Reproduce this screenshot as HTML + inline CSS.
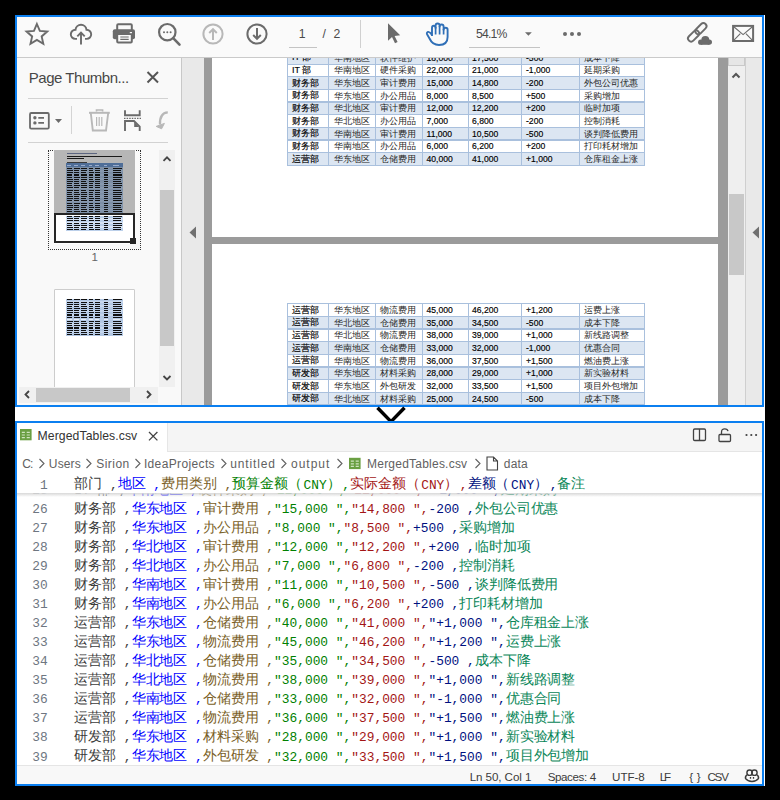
<!DOCTYPE html>
<html><head><meta charset="utf-8"><style>
html,body{margin:0;padding:0}
body{width:780px;height:800px;background:#000;position:relative;overflow:hidden;font-family:"Liberation Sans",sans-serif}
.cj{position:absolute;font-size:14px;line-height:14px;white-space:pre;font-weight:500}
.cj i{font-style:normal;display:inline-block;width:13.95px}
</style></head><body>
<div style="position:absolute;left:15px;top:15px;width:750px;height:771px;background:#ffffff;"></div>
<div style="position:absolute;left:17px;top:17px;width:745px;height:40px;background:#fafafa;"></div>
<div style="position:absolute;left:17px;top:57px;width:745px;height:1px;background:#cacaca;"></div>
<div style="position:absolute;left:17px;top:58px;width:164px;height:347px;background:#f9f9f9;"></div>
<div style="position:absolute;left:181px;top:58px;width:1px;height:347px;background:#c8c8c8;"></div>
<div style="position:absolute;left:182px;top:58px;width:22px;height:347px;background:#e9e9e9;"></div>
<div style="position:absolute;left:204px;top:58px;width:524px;height:347px;background:#9b9b9b;"></div>
<div style="position:absolute;left:212px;top:58px;width:506px;height:179px;background:#ffffff;"></div>
<div style="position:absolute;left:212px;top:244px;width:506px;height:161px;background:#ffffff;"></div>
<div style="position:absolute;left:728px;top:58px;width:17px;height:347px;background:#efefef;"></div>
<div style="position:absolute;left:745px;top:58px;width:1px;height:347px;background:#cfcfcf;"></div>
<div style="position:absolute;left:746px;top:58px;width:16px;height:347px;background:#e9e9e9;"></div>
<div style="position:absolute;left:729px;top:194px;width:15px;height:81px;background:#c8c8c8;"></div>
<div style="position:absolute;left:728px;top:58px;width:17px;height:8px;background:#e6e6e6;box-sizing:border-box;border:1px solid #c9c9c9;border-top:none;"></div>
<svg style="position:absolute;left:730px;top:70px;" width="12" height="10" viewBox="0 0 12 10"><path d="M2.5,7.5 L6,4 L9.5,7.5" fill="none" stroke="#555" stroke-width="2"/></svg>
<svg style="position:absolute;left:188px;top:226px;" width="10" height="13" viewBox="0 0 10 13"><path d="M8,0.5 L8,12.5 L1.5,6.5 Z" fill="#707070"/></svg>
<svg style="position:absolute;left:751.3px;top:226px;" width="10" height="13" viewBox="0 0 10 13"><path d="M8,0.5 L8,12.5 L1.5,6.5 Z" fill="#707070"/></svg>
<svg style="position:absolute;left:0px;top:0px;" width="60" height="60" viewBox="0 0 60 60"><polygon points="36.90,24.00 39.84,30.85 47.27,31.53 41.66,36.45 43.31,43.72 36.90,39.90 30.49,43.72 32.14,36.45 26.53,31.53 33.96,30.85" fill="none" stroke="#6b6b6b" stroke-width="1.9" stroke-linejoin="miter"/></svg>
<svg style="position:absolute;left:66px;top:20px;" width="30" height="28" viewBox="0 0 30 28"><path d="M11,18.9 H9.3 A4.6,4.6 0 1 1 9.53,9.70 A5.5,5.5 0 0 1 20.47,9.70 A4.6,4.6 0 1 1 20.7,18.9 H19" fill="none" stroke="#6b6b6b" stroke-width="1.9"/><path d="M15,24.5 L15,12.8 M11.3,16.3 L15,12.6 L18.7,16.3" fill="none" stroke="#6b6b6b" stroke-width="1.9"/></svg>
<svg style="position:absolute;left:110px;top:20px;" width="28" height="28" viewBox="0 0 28 28"><rect x="7.2" y="4.2" width="14.6" height="7" rx="1" fill="none" stroke="#6b6b6b" stroke-width="2"/><rect x="2.8" y="9.2" width="22.2" height="10" rx="2" fill="#6b6b6b"/><rect x="7.2" y="13.9" width="14.6" height="8.6" rx="1" fill="#fafafa" stroke="#6b6b6b" stroke-width="2"/><path d="M10.3,17 H18.7 M10.3,19.4 H18.7" stroke="#6b6b6b" stroke-width="1.2"/><rect x="19.8" y="12" width="2.2" height="1.2" fill="#fafafa"/></svg>
<svg style="position:absolute;left:150px;top:17px;" width="34" height="32" viewBox="0 0 34 32"><circle cx="17.3" cy="15.2" r="8.2" fill="none" stroke="#6b6b6b" stroke-width="2.2"/><path d="M23.2,21.2 L29.5,27.6" stroke="#6b6b6b" stroke-width="2.6" stroke-linecap="round"/><circle cx="14" cy="15.2" r="1" fill="#6b6b6b"/><circle cx="17.3" cy="15.2" r="1" fill="#6b6b6b"/><circle cx="20.6" cy="15.2" r="1" fill="#6b6b6b"/></svg>
<svg style="position:absolute;left:200px;top:21px;" width="26" height="26" viewBox="0 0 26 26"><circle cx="13" cy="13" r="9.6" fill="none" stroke="#b8b8b8" stroke-width="2"/><path d="M13,19 L13,8.2 M9.2,12 L13,8.2 L16.8,12" fill="none" stroke="#b8b8b8" stroke-width="2"/></svg>
<svg style="position:absolute;left:244px;top:21px;" width="26" height="26" viewBox="0 0 26 26"><circle cx="13" cy="13" r="9.6" fill="none" stroke="#6b6b6b" stroke-width="2"/><path d="M13,7 L13,17.8 M9.2,14 L13,17.8 L16.8,14" fill="none" stroke="#6b6b6b" stroke-width="2"/></svg>
<div style="position:absolute;left:298.67px;top:27.87px;font-size:12.2px;line-height:12.2px;color:#4a4a4a;font-weight:normal;letter-spacing:0.000px;white-space:pre;">1</div>
<div style="position:absolute;left:289px;top:47px;width:28px;height:1px;background:#c4c4c4;"></div>
<div style="position:absolute;left:322.50px;top:27.87px;font-size:12.2px;line-height:12.2px;color:#4a4a4a;font-weight:normal;letter-spacing:0.000px;white-space:pre;">/</div>
<div style="position:absolute;left:333.39px;top:27.87px;font-size:12.2px;line-height:12.2px;color:#4a4a4a;font-weight:normal;letter-spacing:0.000px;white-space:pre;">2</div>
<div style="position:absolute;left:360px;top:20px;width:1px;height:28px;background:#d0d0d0;"></div>
<svg style="position:absolute;left:380px;top:17px;" width="30" height="30" viewBox="0 0 30 30"><path d="M8,6.3 L20.2,18.3 L14.6,18.9 L17.6,25 L15,26.3 L12,20.1 L8,23.8 Z" fill="#6b6b6b"/></svg>
<svg style="position:absolute;left:420px;top:19px;" width="36" height="30" viewBox="0 0 36 30"><path d="M12,17 L12,8.9 Q12,6.7 13.8,6.7 Q15.6,6.7 15.6,8.9 L15.6,6.6 Q15.6,4.5 17.6,4.5 Q19.6,4.5 19.6,6.6 L19.6,7.6 Q19.6,5.5 21.6,5.5 Q23.6,5.5 23.6,7.6 L23.6,10.7 Q23.6,8.8 25.6,8.8 Q27.6,8.8 27.6,10.7 L27.6,18 Q27.6,26 19,26 Q12.5,26 9.5,19.5 L7.2,15.6 Q6.2,13.6 8,12.9 Q9.8,12.4 12,16" fill="none" stroke="#2f6fb7" stroke-width="1.9" stroke-linejoin="round"/><path d="M15.6,8 L15.6,15.6 M19.6,7 L19.6,15.6 M23.6,10 L23.6,15.6" stroke="#2f6fb7" stroke-width="1.7"/></svg>
<div style="position:absolute;left:476.01px;top:28.07px;font-size:12.2px;line-height:12.2px;color:#4a4a4a;font-weight:normal;letter-spacing:-0.792px;white-space:pre;">54.1%</div>
<svg style="position:absolute;left:522px;top:30px;" width="12" height="8" viewBox="0 0 12 8"><path d="M3,2.3 L9.8,2.3 L6.4,5.7 Z" fill="#6b6b6b"/></svg>
<div style="position:absolute;left:469px;top:47px;width:71px;height:1px;background:#c4c4c4;"></div>
<svg style="position:absolute;left:560px;top:28px;" width="24" height="12" viewBox="0 0 24 12"><circle cx="5" cy="6" r="2" fill="#6b6b6b"/><circle cx="12" cy="6" r="2" fill="#6b6b6b"/><circle cx="19" cy="6" r="2" fill="#6b6b6b"/></svg>
<svg style="position:absolute;left:684px;top:19px;" width="32" height="30" viewBox="0 0 32 30"><g fill="none" stroke="#6b6b6b" stroke-width="1.9"><rect x="-6.6" y="-3.1" width="13.2" height="6.2" rx="3.1" transform="translate(16.9 9.7) rotate(-45)"/><rect x="-6.6" y="-3.1" width="13.2" height="6.2" rx="3.1" transform="translate(9.6 17.0) rotate(-45)"/></g><g fill="#fafafa"><circle cx="21.3" cy="20.9" r="5.3"/><circle cx="16.7" cy="23.2" r="3.9"/><circle cx="25.3" cy="23.1" r="4"/></g><g fill="#6b6b6b"><circle cx="21.3" cy="20.9" r="4"/><circle cx="16.7" cy="23.2" r="2.6"/><circle cx="25.3" cy="23.1" r="2.7"/><rect x="16.7" y="21" width="8.6" height="4.8"/></g></svg>
<svg style="position:absolute;left:730px;top:22px;" width="28" height="24" viewBox="0 0 28 24"><rect x="3.1" y="3.9" width="20" height="15.1" fill="none" stroke="#6b6b6b" stroke-width="2"/><path d="M3.5,4.5 L13.1,12.6 L22.7,4.5 M3.5,18.6 L10.3,11.6 M22.7,18.6 L15.9,11.6" fill="none" stroke="#6b6b6b" stroke-width="1.1"/></svg>
<div style="position:absolute;left:28.77px;top:70.10px;font-size:15px;line-height:15px;color:#474747;font-weight:normal;letter-spacing:-0.471px;white-space:pre;">Page Thumbn...</div>
<svg style="position:absolute;left:144px;top:68px;" width="18" height="18" viewBox="0 0 18 18"><path d="M3.5,4 L14,14.5 M14,4 L3.5,14.5" stroke="#555" stroke-width="2"/></svg>
<div style="position:absolute;left:28px;top:98px;width:140px;height:1px;background:#d2d2d2;"></div>
<svg style="position:absolute;left:26px;top:108px;" width="40" height="24" viewBox="0 0 40 24"><rect x="4" y="5" width="18.8" height="15.6" rx="1.2" fill="none" stroke="#6b6b6b" stroke-width="1.8"/><circle cx="8.9" cy="9.8" r="1.7" fill="#6b6b6b"/><circle cx="8.9" cy="14.9" r="1.7" fill="#6b6b6b"/><path d="M12.3,9.8 H18 M12.3,14.9 H18" stroke="#6b6b6b" stroke-width="1.8"/><path d="M29,11 L36,11 L32.5,14.9 Z" fill="#6b6b6b"/></svg>
<div style="position:absolute;left:71px;top:106px;width:1px;height:28px;background:#d4d4d4;"></div>
<svg style="position:absolute;left:86px;top:106px;" width="28" height="28" viewBox="0 0 28 28"><path d="M10.5,5.5 L10.5,4 L16.6,4 L16.6,5.5" fill="none" stroke="#b8b8b8" stroke-width="1.6"/><path d="M3,6.8 L23.8,6.8" stroke="#b8b8b8" stroke-width="2"/><path d="M4.8,7 L6.8,24.5 L20,24.5 L22.2,7" fill="none" stroke="#b8b8b8" stroke-width="1.9"/><path d="M10.6,11 V20 M13.2,11 V20 M15.8,11 V20" stroke="#b8b8b8" stroke-width="1.2"/></svg>
<svg style="position:absolute;left:120px;top:106px;" width="26" height="28" viewBox="0 0 26 28"><path d="M5,4.2 V9.3 H19.7 V4.2" fill="none" stroke="#6b6b6b" stroke-width="1.9"/><path d="M4,12.4 H21" stroke="#6b6b6b" stroke-width="1.3" stroke-dasharray="1.5 1.1"/><path d="M5,25 V15 H14 L19.7,20.7 V25" fill="none" stroke="#6b6b6b" stroke-width="1.9"/><path d="M14.2,16 L14.2,20.9 L19,20.9 Z" fill="#6b6b6b"/></svg>
<div style="position:absolute;left:150px;top:106px;width:18px;height:28px;overflow:hidden">
<svg style="position:absolute;left:0px;top:0px;" width="26" height="28" viewBox="0 0 26 28"><path d="M17.8,6.3 Q9.5,6.8 10,18.5" fill="none" stroke="#b8b8b8" stroke-width="2.3"/><path d="M6.2,20.4 L14.4,17.4 L11.6,22.8 Z" fill="#b8b8b8" stroke="#b8b8b8" stroke-width="1" stroke-linejoin="round"/></svg>
</div>
<div style="position:absolute;left:28px;top:142px;width:140px;height:1px;background:#d2d2d2;"></div>
<div style="position:absolute;left:48px;top:150px;width:93px;height:100px;box-sizing:border-box;border:1px dotted #333;"></div>
<div style="position:absolute;left:54px;top:150px;width:81px;height:93.5px;background:#ffffff;"></div>
<div style="position:absolute;left:54px;top:150px;width:81px;height:63px;background:#b6b6b6;"></div>
<div style="position:absolute;left:67px;top:152.8px;width:30px;height:1.2px;background:#5d6680;"></div>
<div style="position:absolute;left:67px;top:156px;width:55px;height:1.1px;background:#1a1a1a;"></div>
<div style="position:absolute;left:67px;top:158.1px;width:17px;height:1.1px;background:#1a1a1a;"></div>
<div style="position:absolute;left:67px;top:161.6px;width:20px;height:0.9px;background:#3a3a3a;"></div>
<div style="position:absolute;left:66px;top:163px;width:57px;height:4.4px;background:#4f6e98;"></div>
<div style="position:absolute;left:67.2px;top:164.6px;width:3.9199999999999995px;height:0.9px;background:#9aaccc;"></div>
<div style="position:absolute;left:73.6px;top:164.6px;width:4.34px;height:0.9px;background:#9aaccc;"></div>
<div style="position:absolute;left:81.0px;top:164.6px;width:4.34px;height:0.9px;background:#9aaccc;"></div>
<div style="position:absolute;left:88.6px;top:164.6px;width:3.5px;height:0.9px;background:#9aaccc;"></div>
<div style="position:absolute;left:95.4px;top:164.6px;width:3.5px;height:0.9px;background:#9aaccc;"></div>
<div style="position:absolute;left:104.2px;top:164.6px;width:2.94px;height:0.9px;background:#9aaccc;"></div>
<div style="position:absolute;left:112.8px;top:164.6px;width:6.58px;height:0.9px;background:#9aaccc;"></div>
<div style="position:absolute;left:66px;top:167.4px;width:57px;height:2.16px;background:#7d8fa6;"></div>
<div style="position:absolute;left:67.2px;top:167.95000000000002px;width:4.76px;height:1.1px;background:#101010;"></div>
<div style="position:absolute;left:73.6px;top:167.95000000000002px;width:6.2px;height:1.1px;background:#101010;"></div>
<div style="position:absolute;left:81.0px;top:167.95000000000002px;width:5.89px;height:1.1px;background:#101010;"></div>
<div style="position:absolute;left:88.6px;top:167.95000000000002px;width:4.5px;height:1.1px;background:#101010;"></div>
<div style="position:absolute;left:95.4px;top:167.95000000000002px;width:4.25px;height:1.1px;background:#101010;"></div>
<div style="position:absolute;left:104.2px;top:167.95000000000002px;width:4.2px;height:1.1px;background:#101010;"></div>
<div style="position:absolute;left:112.8px;top:167.95000000000002px;width:8.93px;height:1.1px;background:#101010;"></div>
<div style="position:absolute;left:66px;top:169.56px;width:57px;height:2.16px;background:#8798ae;"></div>
<div style="position:absolute;left:67.2px;top:170.11px;width:5.6px;height:1.1px;background:#101010;"></div>
<div style="position:absolute;left:73.6px;top:170.11px;width:5.89px;height:1.1px;background:#101010;"></div>
<div style="position:absolute;left:81.0px;top:170.11px;width:5.58px;height:1.1px;background:#101010;"></div>
<div style="position:absolute;left:88.6px;top:170.11px;width:4.25px;height:1.1px;background:#101010;"></div>
<div style="position:absolute;left:95.4px;top:170.11px;width:5.0px;height:1.1px;background:#101010;"></div>
<div style="position:absolute;left:104.2px;top:170.11px;width:3.9899999999999998px;height:1.1px;background:#101010;"></div>
<div style="position:absolute;left:112.8px;top:170.11px;width:8.46px;height:1.1px;background:#101010;"></div>
<div style="position:absolute;left:66px;top:171.72px;width:57px;height:2.16px;background:#7d8fa6;"></div>
<div style="position:absolute;left:67.2px;top:172.27px;width:5.319999999999999px;height:1.1px;background:#101010;"></div>
<div style="position:absolute;left:73.6px;top:172.27px;width:5.58px;height:1.1px;background:#101010;"></div>
<div style="position:absolute;left:81.0px;top:172.27px;width:5.27px;height:1.1px;background:#101010;"></div>
<div style="position:absolute;left:88.6px;top:172.27px;width:5.0px;height:1.1px;background:#101010;"></div>
<div style="position:absolute;left:95.4px;top:172.27px;width:4.75px;height:1.1px;background:#101010;"></div>
<div style="position:absolute;left:104.2px;top:172.27px;width:3.7800000000000002px;height:1.1px;background:#101010;"></div>
<div style="position:absolute;left:112.8px;top:172.27px;width:7.99px;height:1.1px;background:#101010;"></div>
<div style="position:absolute;left:66px;top:173.88px;width:57px;height:2.16px;background:#8798ae;"></div>
<div style="position:absolute;left:67.2px;top:174.43px;width:5.04px;height:1.1px;background:#101010;"></div>
<div style="position:absolute;left:73.6px;top:174.43px;width:5.27px;height:1.1px;background:#101010;"></div>
<div style="position:absolute;left:81.0px;top:174.43px;width:6.2px;height:1.1px;background:#101010;"></div>
<div style="position:absolute;left:88.6px;top:174.43px;width:4.75px;height:1.1px;background:#101010;"></div>
<div style="position:absolute;left:95.4px;top:174.43px;width:4.5px;height:1.1px;background:#101010;"></div>
<div style="position:absolute;left:104.2px;top:174.43px;width:3.57px;height:1.1px;background:#101010;"></div>
<div style="position:absolute;left:112.8px;top:174.43px;width:9.4px;height:1.1px;background:#101010;"></div>
<div style="position:absolute;left:66px;top:176.04px;width:57px;height:2.16px;background:#7d8fa6;"></div>
<div style="position:absolute;left:67.2px;top:176.59px;width:4.76px;height:1.1px;background:#101010;"></div>
<div style="position:absolute;left:73.6px;top:176.59px;width:6.2px;height:1.1px;background:#101010;"></div>
<div style="position:absolute;left:81.0px;top:176.59px;width:5.89px;height:1.1px;background:#101010;"></div>
<div style="position:absolute;left:88.6px;top:176.59px;width:4.5px;height:1.1px;background:#101010;"></div>
<div style="position:absolute;left:95.4px;top:176.59px;width:4.25px;height:1.1px;background:#101010;"></div>
<div style="position:absolute;left:104.2px;top:176.59px;width:4.2px;height:1.1px;background:#101010;"></div>
<div style="position:absolute;left:112.8px;top:176.59px;width:8.93px;height:1.1px;background:#101010;"></div>
<div style="position:absolute;left:66px;top:178.2px;width:57px;height:2.16px;background:#8798ae;"></div>
<div style="position:absolute;left:67.2px;top:178.75px;width:5.6px;height:1.1px;background:#101010;"></div>
<div style="position:absolute;left:73.6px;top:178.75px;width:5.89px;height:1.1px;background:#101010;"></div>
<div style="position:absolute;left:81.0px;top:178.75px;width:5.58px;height:1.1px;background:#101010;"></div>
<div style="position:absolute;left:88.6px;top:178.75px;width:4.25px;height:1.1px;background:#101010;"></div>
<div style="position:absolute;left:95.4px;top:178.75px;width:5.0px;height:1.1px;background:#101010;"></div>
<div style="position:absolute;left:104.2px;top:178.75px;width:3.9899999999999998px;height:1.1px;background:#101010;"></div>
<div style="position:absolute;left:112.8px;top:178.75px;width:8.46px;height:1.1px;background:#101010;"></div>
<div style="position:absolute;left:66px;top:180.35999999999999px;width:57px;height:2.16px;background:#7d8fa6;"></div>
<div style="position:absolute;left:67.2px;top:180.91px;width:5.319999999999999px;height:1.1px;background:#101010;"></div>
<div style="position:absolute;left:73.6px;top:180.91px;width:5.58px;height:1.1px;background:#101010;"></div>
<div style="position:absolute;left:81.0px;top:180.91px;width:5.27px;height:1.1px;background:#101010;"></div>
<div style="position:absolute;left:88.6px;top:180.91px;width:5.0px;height:1.1px;background:#101010;"></div>
<div style="position:absolute;left:95.4px;top:180.91px;width:4.75px;height:1.1px;background:#101010;"></div>
<div style="position:absolute;left:104.2px;top:180.91px;width:3.7800000000000002px;height:1.1px;background:#101010;"></div>
<div style="position:absolute;left:112.8px;top:180.91px;width:7.99px;height:1.1px;background:#101010;"></div>
<div style="position:absolute;left:66px;top:182.51999999999998px;width:57px;height:2.16px;background:#8798ae;"></div>
<div style="position:absolute;left:67.2px;top:183.07px;width:5.04px;height:1.1px;background:#101010;"></div>
<div style="position:absolute;left:73.6px;top:183.07px;width:5.27px;height:1.1px;background:#101010;"></div>
<div style="position:absolute;left:81.0px;top:183.07px;width:6.2px;height:1.1px;background:#101010;"></div>
<div style="position:absolute;left:88.6px;top:183.07px;width:4.75px;height:1.1px;background:#101010;"></div>
<div style="position:absolute;left:95.4px;top:183.07px;width:4.5px;height:1.1px;background:#101010;"></div>
<div style="position:absolute;left:104.2px;top:183.07px;width:3.57px;height:1.1px;background:#101010;"></div>
<div style="position:absolute;left:112.8px;top:183.07px;width:9.4px;height:1.1px;background:#101010;"></div>
<div style="position:absolute;left:66px;top:184.67999999999998px;width:57px;height:2.16px;background:#7d8fa6;"></div>
<div style="position:absolute;left:67.2px;top:185.23px;width:4.76px;height:1.1px;background:#101010;"></div>
<div style="position:absolute;left:73.6px;top:185.23px;width:6.2px;height:1.1px;background:#101010;"></div>
<div style="position:absolute;left:81.0px;top:185.23px;width:5.89px;height:1.1px;background:#101010;"></div>
<div style="position:absolute;left:88.6px;top:185.23px;width:4.5px;height:1.1px;background:#101010;"></div>
<div style="position:absolute;left:95.4px;top:185.23px;width:4.25px;height:1.1px;background:#101010;"></div>
<div style="position:absolute;left:104.2px;top:185.23px;width:4.2px;height:1.1px;background:#101010;"></div>
<div style="position:absolute;left:112.8px;top:185.23px;width:8.93px;height:1.1px;background:#101010;"></div>
<div style="position:absolute;left:66px;top:186.83999999999997px;width:57px;height:2.16px;background:#8798ae;"></div>
<div style="position:absolute;left:67.2px;top:187.39px;width:5.6px;height:1.1px;background:#101010;"></div>
<div style="position:absolute;left:73.6px;top:187.39px;width:5.89px;height:1.1px;background:#101010;"></div>
<div style="position:absolute;left:81.0px;top:187.39px;width:5.58px;height:1.1px;background:#101010;"></div>
<div style="position:absolute;left:88.6px;top:187.39px;width:4.25px;height:1.1px;background:#101010;"></div>
<div style="position:absolute;left:95.4px;top:187.39px;width:5.0px;height:1.1px;background:#101010;"></div>
<div style="position:absolute;left:104.2px;top:187.39px;width:3.9899999999999998px;height:1.1px;background:#101010;"></div>
<div style="position:absolute;left:112.8px;top:187.39px;width:8.46px;height:1.1px;background:#101010;"></div>
<div style="position:absolute;left:66px;top:188.99999999999997px;width:57px;height:2.16px;background:#7d8fa6;"></div>
<div style="position:absolute;left:67.2px;top:189.54999999999998px;width:5.319999999999999px;height:1.1px;background:#101010;"></div>
<div style="position:absolute;left:73.6px;top:189.54999999999998px;width:5.58px;height:1.1px;background:#101010;"></div>
<div style="position:absolute;left:81.0px;top:189.54999999999998px;width:5.27px;height:1.1px;background:#101010;"></div>
<div style="position:absolute;left:88.6px;top:189.54999999999998px;width:5.0px;height:1.1px;background:#101010;"></div>
<div style="position:absolute;left:95.4px;top:189.54999999999998px;width:4.75px;height:1.1px;background:#101010;"></div>
<div style="position:absolute;left:104.2px;top:189.54999999999998px;width:3.7800000000000002px;height:1.1px;background:#101010;"></div>
<div style="position:absolute;left:112.8px;top:189.54999999999998px;width:7.99px;height:1.1px;background:#101010;"></div>
<div style="position:absolute;left:66px;top:191.15999999999997px;width:57px;height:2.16px;background:#8798ae;"></div>
<div style="position:absolute;left:67.2px;top:191.70999999999998px;width:5.04px;height:1.1px;background:#101010;"></div>
<div style="position:absolute;left:73.6px;top:191.70999999999998px;width:5.27px;height:1.1px;background:#101010;"></div>
<div style="position:absolute;left:81.0px;top:191.70999999999998px;width:6.2px;height:1.1px;background:#101010;"></div>
<div style="position:absolute;left:88.6px;top:191.70999999999998px;width:4.75px;height:1.1px;background:#101010;"></div>
<div style="position:absolute;left:95.4px;top:191.70999999999998px;width:4.5px;height:1.1px;background:#101010;"></div>
<div style="position:absolute;left:104.2px;top:191.70999999999998px;width:3.57px;height:1.1px;background:#101010;"></div>
<div style="position:absolute;left:112.8px;top:191.70999999999998px;width:9.4px;height:1.1px;background:#101010;"></div>
<div style="position:absolute;left:66px;top:193.31999999999996px;width:57px;height:2.16px;background:#7d8fa6;"></div>
<div style="position:absolute;left:67.2px;top:193.86999999999998px;width:4.76px;height:1.1px;background:#101010;"></div>
<div style="position:absolute;left:73.6px;top:193.86999999999998px;width:6.2px;height:1.1px;background:#101010;"></div>
<div style="position:absolute;left:81.0px;top:193.86999999999998px;width:5.89px;height:1.1px;background:#101010;"></div>
<div style="position:absolute;left:88.6px;top:193.86999999999998px;width:4.5px;height:1.1px;background:#101010;"></div>
<div style="position:absolute;left:95.4px;top:193.86999999999998px;width:4.25px;height:1.1px;background:#101010;"></div>
<div style="position:absolute;left:104.2px;top:193.86999999999998px;width:4.2px;height:1.1px;background:#101010;"></div>
<div style="position:absolute;left:112.8px;top:193.86999999999998px;width:8.93px;height:1.1px;background:#101010;"></div>
<div style="position:absolute;left:66px;top:195.47999999999996px;width:57px;height:2.16px;background:#8798ae;"></div>
<div style="position:absolute;left:67.2px;top:196.02999999999997px;width:5.6px;height:1.1px;background:#101010;"></div>
<div style="position:absolute;left:73.6px;top:196.02999999999997px;width:5.89px;height:1.1px;background:#101010;"></div>
<div style="position:absolute;left:81.0px;top:196.02999999999997px;width:5.58px;height:1.1px;background:#101010;"></div>
<div style="position:absolute;left:88.6px;top:196.02999999999997px;width:4.25px;height:1.1px;background:#101010;"></div>
<div style="position:absolute;left:95.4px;top:196.02999999999997px;width:5.0px;height:1.1px;background:#101010;"></div>
<div style="position:absolute;left:104.2px;top:196.02999999999997px;width:3.9899999999999998px;height:1.1px;background:#101010;"></div>
<div style="position:absolute;left:112.8px;top:196.02999999999997px;width:8.46px;height:1.1px;background:#101010;"></div>
<div style="position:absolute;left:66px;top:197.63999999999996px;width:57px;height:2.16px;background:#7d8fa6;"></div>
<div style="position:absolute;left:67.2px;top:198.18999999999997px;width:5.319999999999999px;height:1.1px;background:#101010;"></div>
<div style="position:absolute;left:73.6px;top:198.18999999999997px;width:5.58px;height:1.1px;background:#101010;"></div>
<div style="position:absolute;left:81.0px;top:198.18999999999997px;width:5.27px;height:1.1px;background:#101010;"></div>
<div style="position:absolute;left:88.6px;top:198.18999999999997px;width:5.0px;height:1.1px;background:#101010;"></div>
<div style="position:absolute;left:95.4px;top:198.18999999999997px;width:4.75px;height:1.1px;background:#101010;"></div>
<div style="position:absolute;left:104.2px;top:198.18999999999997px;width:3.7800000000000002px;height:1.1px;background:#101010;"></div>
<div style="position:absolute;left:112.8px;top:198.18999999999997px;width:7.99px;height:1.1px;background:#101010;"></div>
<div style="position:absolute;left:66px;top:199.79999999999995px;width:57px;height:2.16px;background:#8798ae;"></div>
<div style="position:absolute;left:67.2px;top:200.34999999999997px;width:5.04px;height:1.1px;background:#101010;"></div>
<div style="position:absolute;left:73.6px;top:200.34999999999997px;width:5.27px;height:1.1px;background:#101010;"></div>
<div style="position:absolute;left:81.0px;top:200.34999999999997px;width:6.2px;height:1.1px;background:#101010;"></div>
<div style="position:absolute;left:88.6px;top:200.34999999999997px;width:4.75px;height:1.1px;background:#101010;"></div>
<div style="position:absolute;left:95.4px;top:200.34999999999997px;width:4.5px;height:1.1px;background:#101010;"></div>
<div style="position:absolute;left:104.2px;top:200.34999999999997px;width:3.57px;height:1.1px;background:#101010;"></div>
<div style="position:absolute;left:112.8px;top:200.34999999999997px;width:9.4px;height:1.1px;background:#101010;"></div>
<div style="position:absolute;left:66px;top:201.95999999999995px;width:57px;height:2.16px;background:#7d8fa6;"></div>
<div style="position:absolute;left:67.2px;top:202.50999999999996px;width:4.76px;height:1.1px;background:#101010;"></div>
<div style="position:absolute;left:73.6px;top:202.50999999999996px;width:6.2px;height:1.1px;background:#101010;"></div>
<div style="position:absolute;left:81.0px;top:202.50999999999996px;width:5.89px;height:1.1px;background:#101010;"></div>
<div style="position:absolute;left:88.6px;top:202.50999999999996px;width:4.5px;height:1.1px;background:#101010;"></div>
<div style="position:absolute;left:95.4px;top:202.50999999999996px;width:4.25px;height:1.1px;background:#101010;"></div>
<div style="position:absolute;left:104.2px;top:202.50999999999996px;width:4.2px;height:1.1px;background:#101010;"></div>
<div style="position:absolute;left:112.8px;top:202.50999999999996px;width:8.93px;height:1.1px;background:#101010;"></div>
<div style="position:absolute;left:66px;top:204.11999999999995px;width:57px;height:2.16px;background:#8798ae;"></div>
<div style="position:absolute;left:67.2px;top:204.66999999999996px;width:5.6px;height:1.1px;background:#101010;"></div>
<div style="position:absolute;left:73.6px;top:204.66999999999996px;width:5.89px;height:1.1px;background:#101010;"></div>
<div style="position:absolute;left:81.0px;top:204.66999999999996px;width:5.58px;height:1.1px;background:#101010;"></div>
<div style="position:absolute;left:88.6px;top:204.66999999999996px;width:4.25px;height:1.1px;background:#101010;"></div>
<div style="position:absolute;left:95.4px;top:204.66999999999996px;width:5.0px;height:1.1px;background:#101010;"></div>
<div style="position:absolute;left:104.2px;top:204.66999999999996px;width:3.9899999999999998px;height:1.1px;background:#101010;"></div>
<div style="position:absolute;left:112.8px;top:204.66999999999996px;width:8.46px;height:1.1px;background:#101010;"></div>
<div style="position:absolute;left:66px;top:206.27999999999994px;width:57px;height:2.16px;background:#7d8fa6;"></div>
<div style="position:absolute;left:67.2px;top:206.82999999999996px;width:5.319999999999999px;height:1.1px;background:#101010;"></div>
<div style="position:absolute;left:73.6px;top:206.82999999999996px;width:5.58px;height:1.1px;background:#101010;"></div>
<div style="position:absolute;left:81.0px;top:206.82999999999996px;width:5.27px;height:1.1px;background:#101010;"></div>
<div style="position:absolute;left:88.6px;top:206.82999999999996px;width:5.0px;height:1.1px;background:#101010;"></div>
<div style="position:absolute;left:95.4px;top:206.82999999999996px;width:4.75px;height:1.1px;background:#101010;"></div>
<div style="position:absolute;left:104.2px;top:206.82999999999996px;width:3.7800000000000002px;height:1.1px;background:#101010;"></div>
<div style="position:absolute;left:112.8px;top:206.82999999999996px;width:7.99px;height:1.1px;background:#101010;"></div>
<div style="position:absolute;left:66px;top:208.43999999999994px;width:57px;height:2.16px;background:#8798ae;"></div>
<div style="position:absolute;left:67.2px;top:208.98999999999995px;width:5.04px;height:1.1px;background:#101010;"></div>
<div style="position:absolute;left:73.6px;top:208.98999999999995px;width:5.27px;height:1.1px;background:#101010;"></div>
<div style="position:absolute;left:81.0px;top:208.98999999999995px;width:6.2px;height:1.1px;background:#101010;"></div>
<div style="position:absolute;left:88.6px;top:208.98999999999995px;width:4.75px;height:1.1px;background:#101010;"></div>
<div style="position:absolute;left:95.4px;top:208.98999999999995px;width:4.5px;height:1.1px;background:#101010;"></div>
<div style="position:absolute;left:104.2px;top:208.98999999999995px;width:3.57px;height:1.1px;background:#101010;"></div>
<div style="position:absolute;left:112.8px;top:208.98999999999995px;width:9.4px;height:1.1px;background:#101010;"></div>
<div style="position:absolute;left:66px;top:210.59999999999994px;width:57px;height:2.16px;background:#7d8fa6;"></div>
<div style="position:absolute;left:67.2px;top:211.14999999999995px;width:4.76px;height:1.1px;background:#101010;"></div>
<div style="position:absolute;left:73.6px;top:211.14999999999995px;width:6.2px;height:1.1px;background:#101010;"></div>
<div style="position:absolute;left:81.0px;top:211.14999999999995px;width:5.89px;height:1.1px;background:#101010;"></div>
<div style="position:absolute;left:88.6px;top:211.14999999999995px;width:4.5px;height:1.1px;background:#101010;"></div>
<div style="position:absolute;left:95.4px;top:211.14999999999995px;width:4.25px;height:1.1px;background:#101010;"></div>
<div style="position:absolute;left:104.2px;top:211.14999999999995px;width:4.2px;height:1.1px;background:#101010;"></div>
<div style="position:absolute;left:112.8px;top:211.14999999999995px;width:8.93px;height:1.1px;background:#101010;"></div>
<div style="position:absolute;left:66px;top:215.5px;width:57px;height:2.16px;background:#bcd0ea;"></div>
<div style="position:absolute;left:67.2px;top:216.05px;width:4.76px;height:1.1px;background:#101010;"></div>
<div style="position:absolute;left:73.6px;top:216.05px;width:6.2px;height:1.1px;background:#101010;"></div>
<div style="position:absolute;left:81.0px;top:216.05px;width:5.89px;height:1.1px;background:#101010;"></div>
<div style="position:absolute;left:88.6px;top:216.05px;width:4.5px;height:1.1px;background:#101010;"></div>
<div style="position:absolute;left:95.4px;top:216.05px;width:4.25px;height:1.1px;background:#101010;"></div>
<div style="position:absolute;left:104.2px;top:216.05px;width:4.2px;height:1.1px;background:#101010;"></div>
<div style="position:absolute;left:112.8px;top:216.05px;width:8.93px;height:1.1px;background:#101010;"></div>
<div style="position:absolute;left:66px;top:217.66px;width:57px;height:2.16px;background:#d6e2f2;"></div>
<div style="position:absolute;left:67.2px;top:218.21px;width:5.6px;height:1.1px;background:#101010;"></div>
<div style="position:absolute;left:73.6px;top:218.21px;width:5.89px;height:1.1px;background:#101010;"></div>
<div style="position:absolute;left:81.0px;top:218.21px;width:5.58px;height:1.1px;background:#101010;"></div>
<div style="position:absolute;left:88.6px;top:218.21px;width:4.25px;height:1.1px;background:#101010;"></div>
<div style="position:absolute;left:95.4px;top:218.21px;width:5.0px;height:1.1px;background:#101010;"></div>
<div style="position:absolute;left:104.2px;top:218.21px;width:3.9899999999999998px;height:1.1px;background:#101010;"></div>
<div style="position:absolute;left:112.8px;top:218.21px;width:8.46px;height:1.1px;background:#101010;"></div>
<div style="position:absolute;left:66px;top:219.82px;width:57px;height:2.16px;background:#bcd0ea;"></div>
<div style="position:absolute;left:67.2px;top:220.37px;width:5.319999999999999px;height:1.1px;background:#101010;"></div>
<div style="position:absolute;left:73.6px;top:220.37px;width:5.58px;height:1.1px;background:#101010;"></div>
<div style="position:absolute;left:81.0px;top:220.37px;width:5.27px;height:1.1px;background:#101010;"></div>
<div style="position:absolute;left:88.6px;top:220.37px;width:5.0px;height:1.1px;background:#101010;"></div>
<div style="position:absolute;left:95.4px;top:220.37px;width:4.75px;height:1.1px;background:#101010;"></div>
<div style="position:absolute;left:104.2px;top:220.37px;width:3.7800000000000002px;height:1.1px;background:#101010;"></div>
<div style="position:absolute;left:112.8px;top:220.37px;width:7.99px;height:1.1px;background:#101010;"></div>
<div style="position:absolute;left:66px;top:221.98px;width:57px;height:2.16px;background:#d6e2f2;"></div>
<div style="position:absolute;left:67.2px;top:222.53px;width:5.04px;height:1.1px;background:#101010;"></div>
<div style="position:absolute;left:73.6px;top:222.53px;width:5.27px;height:1.1px;background:#101010;"></div>
<div style="position:absolute;left:81.0px;top:222.53px;width:6.2px;height:1.1px;background:#101010;"></div>
<div style="position:absolute;left:88.6px;top:222.53px;width:4.75px;height:1.1px;background:#101010;"></div>
<div style="position:absolute;left:95.4px;top:222.53px;width:4.5px;height:1.1px;background:#101010;"></div>
<div style="position:absolute;left:104.2px;top:222.53px;width:3.57px;height:1.1px;background:#101010;"></div>
<div style="position:absolute;left:112.8px;top:222.53px;width:9.4px;height:1.1px;background:#101010;"></div>
<div style="position:absolute;left:66px;top:224.14px;width:57px;height:2.16px;background:#bcd0ea;"></div>
<div style="position:absolute;left:67.2px;top:224.69px;width:4.76px;height:1.1px;background:#101010;"></div>
<div style="position:absolute;left:73.6px;top:224.69px;width:6.2px;height:1.1px;background:#101010;"></div>
<div style="position:absolute;left:81.0px;top:224.69px;width:5.89px;height:1.1px;background:#101010;"></div>
<div style="position:absolute;left:88.6px;top:224.69px;width:4.5px;height:1.1px;background:#101010;"></div>
<div style="position:absolute;left:95.4px;top:224.69px;width:4.25px;height:1.1px;background:#101010;"></div>
<div style="position:absolute;left:104.2px;top:224.69px;width:4.2px;height:1.1px;background:#101010;"></div>
<div style="position:absolute;left:112.8px;top:224.69px;width:8.93px;height:1.1px;background:#101010;"></div>
<div style="position:absolute;left:66px;top:226.29999999999998px;width:57px;height:2.16px;background:#d6e2f2;"></div>
<div style="position:absolute;left:67.2px;top:226.85px;width:5.6px;height:1.1px;background:#101010;"></div>
<div style="position:absolute;left:73.6px;top:226.85px;width:5.89px;height:1.1px;background:#101010;"></div>
<div style="position:absolute;left:81.0px;top:226.85px;width:5.58px;height:1.1px;background:#101010;"></div>
<div style="position:absolute;left:88.6px;top:226.85px;width:4.25px;height:1.1px;background:#101010;"></div>
<div style="position:absolute;left:95.4px;top:226.85px;width:5.0px;height:1.1px;background:#101010;"></div>
<div style="position:absolute;left:104.2px;top:226.85px;width:3.9899999999999998px;height:1.1px;background:#101010;"></div>
<div style="position:absolute;left:112.8px;top:226.85px;width:8.46px;height:1.1px;background:#101010;"></div>
<div style="position:absolute;left:66px;top:228.45999999999998px;width:57px;height:2.16px;background:#bcd0ea;"></div>
<div style="position:absolute;left:67.2px;top:229.01px;width:5.319999999999999px;height:1.1px;background:#101010;"></div>
<div style="position:absolute;left:73.6px;top:229.01px;width:5.58px;height:1.1px;background:#101010;"></div>
<div style="position:absolute;left:81.0px;top:229.01px;width:5.27px;height:1.1px;background:#101010;"></div>
<div style="position:absolute;left:88.6px;top:229.01px;width:5.0px;height:1.1px;background:#101010;"></div>
<div style="position:absolute;left:95.4px;top:229.01px;width:4.75px;height:1.1px;background:#101010;"></div>
<div style="position:absolute;left:104.2px;top:229.01px;width:3.7800000000000002px;height:1.1px;background:#101010;"></div>
<div style="position:absolute;left:112.8px;top:229.01px;width:7.99px;height:1.1px;background:#101010;"></div>
<div style="position:absolute;left:54.3px;top:213px;width:81px;height:29.5px;box-sizing:border-box;border:2px solid #262626;"></div>
<div style="position:absolute;left:130px;top:238px;width:5.5px;height:5.5px;background:#262626;"></div>
<div style="position:absolute;left:91.50px;top:251.77px;font-size:11.5px;line-height:11.5px;color:#666;font-family:'Liberation Sans',sans-serif;white-space:pre;">1</div>
<div style="position:absolute;left:54.5px;top:290px;width:79.5px;height:97px;background:#ffffff;box-shadow:0 0 0 0.6px #b0b0b0;"></div>
<div style="position:absolute;left:66px;top:298.8px;width:57px;height:2.16px;background:#b3c8e4;"></div>
<div style="position:absolute;left:67.2px;top:299.35px;width:4.76px;height:1.1px;background:#101010;"></div>
<div style="position:absolute;left:73.6px;top:299.35px;width:6.2px;height:1.1px;background:#101010;"></div>
<div style="position:absolute;left:81.0px;top:299.35px;width:5.89px;height:1.1px;background:#101010;"></div>
<div style="position:absolute;left:88.6px;top:299.35px;width:4.5px;height:1.1px;background:#101010;"></div>
<div style="position:absolute;left:95.4px;top:299.35px;width:4.25px;height:1.1px;background:#101010;"></div>
<div style="position:absolute;left:104.2px;top:299.35px;width:4.2px;height:1.1px;background:#101010;"></div>
<div style="position:absolute;left:112.8px;top:299.35px;width:8.93px;height:1.1px;background:#101010;"></div>
<div style="position:absolute;left:66px;top:300.96000000000004px;width:57px;height:2.16px;background:#c6d6ec;"></div>
<div style="position:absolute;left:67.2px;top:301.51000000000005px;width:5.6px;height:1.1px;background:#101010;"></div>
<div style="position:absolute;left:73.6px;top:301.51000000000005px;width:5.89px;height:1.1px;background:#101010;"></div>
<div style="position:absolute;left:81.0px;top:301.51000000000005px;width:5.58px;height:1.1px;background:#101010;"></div>
<div style="position:absolute;left:88.6px;top:301.51000000000005px;width:4.25px;height:1.1px;background:#101010;"></div>
<div style="position:absolute;left:95.4px;top:301.51000000000005px;width:5.0px;height:1.1px;background:#101010;"></div>
<div style="position:absolute;left:104.2px;top:301.51000000000005px;width:3.9899999999999998px;height:1.1px;background:#101010;"></div>
<div style="position:absolute;left:112.8px;top:301.51000000000005px;width:8.46px;height:1.1px;background:#101010;"></div>
<div style="position:absolute;left:66px;top:303.12000000000006px;width:57px;height:2.16px;background:#b3c8e4;"></div>
<div style="position:absolute;left:67.2px;top:303.6700000000001px;width:5.319999999999999px;height:1.1px;background:#101010;"></div>
<div style="position:absolute;left:73.6px;top:303.6700000000001px;width:5.58px;height:1.1px;background:#101010;"></div>
<div style="position:absolute;left:81.0px;top:303.6700000000001px;width:5.27px;height:1.1px;background:#101010;"></div>
<div style="position:absolute;left:88.6px;top:303.6700000000001px;width:5.0px;height:1.1px;background:#101010;"></div>
<div style="position:absolute;left:95.4px;top:303.6700000000001px;width:4.75px;height:1.1px;background:#101010;"></div>
<div style="position:absolute;left:104.2px;top:303.6700000000001px;width:3.7800000000000002px;height:1.1px;background:#101010;"></div>
<div style="position:absolute;left:112.8px;top:303.6700000000001px;width:7.99px;height:1.1px;background:#101010;"></div>
<div style="position:absolute;left:66px;top:305.2800000000001px;width:57px;height:2.16px;background:#c6d6ec;"></div>
<div style="position:absolute;left:67.2px;top:305.8300000000001px;width:5.04px;height:1.1px;background:#101010;"></div>
<div style="position:absolute;left:73.6px;top:305.8300000000001px;width:5.27px;height:1.1px;background:#101010;"></div>
<div style="position:absolute;left:81.0px;top:305.8300000000001px;width:6.2px;height:1.1px;background:#101010;"></div>
<div style="position:absolute;left:88.6px;top:305.8300000000001px;width:4.75px;height:1.1px;background:#101010;"></div>
<div style="position:absolute;left:95.4px;top:305.8300000000001px;width:4.5px;height:1.1px;background:#101010;"></div>
<div style="position:absolute;left:104.2px;top:305.8300000000001px;width:3.57px;height:1.1px;background:#101010;"></div>
<div style="position:absolute;left:112.8px;top:305.8300000000001px;width:9.4px;height:1.1px;background:#101010;"></div>
<div style="position:absolute;left:66px;top:307.4400000000001px;width:57px;height:2.16px;background:#b3c8e4;"></div>
<div style="position:absolute;left:67.2px;top:307.9900000000001px;width:4.76px;height:1.1px;background:#101010;"></div>
<div style="position:absolute;left:73.6px;top:307.9900000000001px;width:6.2px;height:1.1px;background:#101010;"></div>
<div style="position:absolute;left:81.0px;top:307.9900000000001px;width:5.89px;height:1.1px;background:#101010;"></div>
<div style="position:absolute;left:88.6px;top:307.9900000000001px;width:4.5px;height:1.1px;background:#101010;"></div>
<div style="position:absolute;left:95.4px;top:307.9900000000001px;width:4.25px;height:1.1px;background:#101010;"></div>
<div style="position:absolute;left:104.2px;top:307.9900000000001px;width:4.2px;height:1.1px;background:#101010;"></div>
<div style="position:absolute;left:112.8px;top:307.9900000000001px;width:8.93px;height:1.1px;background:#101010;"></div>
<div style="position:absolute;left:66px;top:309.60000000000014px;width:57px;height:2.16px;background:#c6d6ec;"></div>
<div style="position:absolute;left:67.2px;top:310.15000000000015px;width:5.6px;height:1.1px;background:#101010;"></div>
<div style="position:absolute;left:73.6px;top:310.15000000000015px;width:5.89px;height:1.1px;background:#101010;"></div>
<div style="position:absolute;left:81.0px;top:310.15000000000015px;width:5.58px;height:1.1px;background:#101010;"></div>
<div style="position:absolute;left:88.6px;top:310.15000000000015px;width:4.25px;height:1.1px;background:#101010;"></div>
<div style="position:absolute;left:95.4px;top:310.15000000000015px;width:5.0px;height:1.1px;background:#101010;"></div>
<div style="position:absolute;left:104.2px;top:310.15000000000015px;width:3.9899999999999998px;height:1.1px;background:#101010;"></div>
<div style="position:absolute;left:112.8px;top:310.15000000000015px;width:8.46px;height:1.1px;background:#101010;"></div>
<div style="position:absolute;left:66px;top:311.76000000000016px;width:57px;height:2.16px;background:#b3c8e4;"></div>
<div style="position:absolute;left:67.2px;top:312.3100000000002px;width:5.319999999999999px;height:1.1px;background:#101010;"></div>
<div style="position:absolute;left:73.6px;top:312.3100000000002px;width:5.58px;height:1.1px;background:#101010;"></div>
<div style="position:absolute;left:81.0px;top:312.3100000000002px;width:5.27px;height:1.1px;background:#101010;"></div>
<div style="position:absolute;left:88.6px;top:312.3100000000002px;width:5.0px;height:1.1px;background:#101010;"></div>
<div style="position:absolute;left:95.4px;top:312.3100000000002px;width:4.75px;height:1.1px;background:#101010;"></div>
<div style="position:absolute;left:104.2px;top:312.3100000000002px;width:3.7800000000000002px;height:1.1px;background:#101010;"></div>
<div style="position:absolute;left:112.8px;top:312.3100000000002px;width:7.99px;height:1.1px;background:#101010;"></div>
<div style="position:absolute;left:66px;top:313.9200000000002px;width:57px;height:2.16px;background:#c6d6ec;"></div>
<div style="position:absolute;left:67.2px;top:314.4700000000002px;width:5.04px;height:1.1px;background:#101010;"></div>
<div style="position:absolute;left:73.6px;top:314.4700000000002px;width:5.27px;height:1.1px;background:#101010;"></div>
<div style="position:absolute;left:81.0px;top:314.4700000000002px;width:6.2px;height:1.1px;background:#101010;"></div>
<div style="position:absolute;left:88.6px;top:314.4700000000002px;width:4.75px;height:1.1px;background:#101010;"></div>
<div style="position:absolute;left:95.4px;top:314.4700000000002px;width:4.5px;height:1.1px;background:#101010;"></div>
<div style="position:absolute;left:104.2px;top:314.4700000000002px;width:3.57px;height:1.1px;background:#101010;"></div>
<div style="position:absolute;left:112.8px;top:314.4700000000002px;width:9.4px;height:1.1px;background:#101010;"></div>
<div style="position:absolute;left:66px;top:316.0800000000002px;width:57px;height:2.16px;background:#b3c8e4;"></div>
<div style="position:absolute;left:67.2px;top:316.6300000000002px;width:4.76px;height:1.1px;background:#101010;"></div>
<div style="position:absolute;left:73.6px;top:316.6300000000002px;width:6.2px;height:1.1px;background:#101010;"></div>
<div style="position:absolute;left:81.0px;top:316.6300000000002px;width:5.89px;height:1.1px;background:#101010;"></div>
<div style="position:absolute;left:88.6px;top:316.6300000000002px;width:4.5px;height:1.1px;background:#101010;"></div>
<div style="position:absolute;left:95.4px;top:316.6300000000002px;width:4.25px;height:1.1px;background:#101010;"></div>
<div style="position:absolute;left:104.2px;top:316.6300000000002px;width:4.2px;height:1.1px;background:#101010;"></div>
<div style="position:absolute;left:112.8px;top:316.6300000000002px;width:8.93px;height:1.1px;background:#101010;"></div>
<div style="position:absolute;left:66px;top:318.24000000000024px;width:57px;height:2.16px;background:#b8cbe5;"></div>
<div style="position:absolute;left:67.2px;top:318.74000000000024px;width:4.4799999999999995px;height:1.1px;background:#e8eef6;"></div>
<div style="position:absolute;left:73.6px;top:318.74000000000024px;width:4.960000000000001px;height:1.1px;background:#e8eef6;"></div>
<div style="position:absolute;left:81.0px;top:318.74000000000024px;width:4.960000000000001px;height:1.1px;background:#e8eef6;"></div>
<div style="position:absolute;left:88.6px;top:318.74000000000024px;width:4.0px;height:1.1px;background:#e8eef6;"></div>
<div style="position:absolute;left:95.4px;top:318.74000000000024px;width:4.0px;height:1.1px;background:#e8eef6;"></div>
<div style="position:absolute;left:104.2px;top:318.74000000000024px;width:3.3600000000000003px;height:1.1px;background:#e8eef6;"></div>
<div style="position:absolute;left:112.8px;top:318.74000000000024px;width:7.5200000000000005px;height:1.1px;background:#e8eef6;"></div>
<div style="position:absolute;left:66px;top:320.40000000000026px;width:57px;height:2.16px;background:#b3c8e4;"></div>
<div style="position:absolute;left:67.2px;top:320.9500000000003px;width:5.319999999999999px;height:1.1px;background:#101010;"></div>
<div style="position:absolute;left:73.6px;top:320.9500000000003px;width:5.58px;height:1.1px;background:#101010;"></div>
<div style="position:absolute;left:81.0px;top:320.9500000000003px;width:5.27px;height:1.1px;background:#101010;"></div>
<div style="position:absolute;left:88.6px;top:320.9500000000003px;width:5.0px;height:1.1px;background:#101010;"></div>
<div style="position:absolute;left:95.4px;top:320.9500000000003px;width:4.75px;height:1.1px;background:#101010;"></div>
<div style="position:absolute;left:104.2px;top:320.9500000000003px;width:3.7800000000000002px;height:1.1px;background:#101010;"></div>
<div style="position:absolute;left:112.8px;top:320.9500000000003px;width:7.99px;height:1.1px;background:#101010;"></div>
<div style="position:absolute;left:66px;top:322.5600000000003px;width:57px;height:2.16px;background:#c6d6ec;"></div>
<div style="position:absolute;left:67.2px;top:323.1100000000003px;width:5.04px;height:1.1px;background:#101010;"></div>
<div style="position:absolute;left:73.6px;top:323.1100000000003px;width:5.27px;height:1.1px;background:#101010;"></div>
<div style="position:absolute;left:81.0px;top:323.1100000000003px;width:6.2px;height:1.1px;background:#101010;"></div>
<div style="position:absolute;left:88.6px;top:323.1100000000003px;width:4.75px;height:1.1px;background:#101010;"></div>
<div style="position:absolute;left:95.4px;top:323.1100000000003px;width:4.5px;height:1.1px;background:#101010;"></div>
<div style="position:absolute;left:104.2px;top:323.1100000000003px;width:3.57px;height:1.1px;background:#101010;"></div>
<div style="position:absolute;left:112.8px;top:323.1100000000003px;width:9.4px;height:1.1px;background:#101010;"></div>
<div style="position:absolute;left:66px;top:324.7200000000003px;width:57px;height:2.16px;background:#b3c8e4;"></div>
<div style="position:absolute;left:67.2px;top:325.2700000000003px;width:4.76px;height:1.1px;background:#101010;"></div>
<div style="position:absolute;left:73.6px;top:325.2700000000003px;width:6.2px;height:1.1px;background:#101010;"></div>
<div style="position:absolute;left:81.0px;top:325.2700000000003px;width:5.89px;height:1.1px;background:#101010;"></div>
<div style="position:absolute;left:88.6px;top:325.2700000000003px;width:4.5px;height:1.1px;background:#101010;"></div>
<div style="position:absolute;left:95.4px;top:325.2700000000003px;width:4.25px;height:1.1px;background:#101010;"></div>
<div style="position:absolute;left:104.2px;top:325.2700000000003px;width:4.2px;height:1.1px;background:#101010;"></div>
<div style="position:absolute;left:112.8px;top:325.2700000000003px;width:8.93px;height:1.1px;background:#101010;"></div>
<div style="position:absolute;left:66px;top:326.88000000000034px;width:57px;height:2.16px;background:#c6d6ec;"></div>
<div style="position:absolute;left:67.2px;top:327.43000000000035px;width:5.6px;height:1.1px;background:#101010;"></div>
<div style="position:absolute;left:73.6px;top:327.43000000000035px;width:5.89px;height:1.1px;background:#101010;"></div>
<div style="position:absolute;left:81.0px;top:327.43000000000035px;width:5.58px;height:1.1px;background:#101010;"></div>
<div style="position:absolute;left:88.6px;top:327.43000000000035px;width:4.25px;height:1.1px;background:#101010;"></div>
<div style="position:absolute;left:95.4px;top:327.43000000000035px;width:5.0px;height:1.1px;background:#101010;"></div>
<div style="position:absolute;left:104.2px;top:327.43000000000035px;width:3.9899999999999998px;height:1.1px;background:#101010;"></div>
<div style="position:absolute;left:112.8px;top:327.43000000000035px;width:8.46px;height:1.1px;background:#101010;"></div>
<div style="position:absolute;left:66px;top:329.04000000000036px;width:57px;height:2.16px;background:#b3c8e4;"></div>
<div style="position:absolute;left:67.2px;top:329.5900000000004px;width:5.319999999999999px;height:1.1px;background:#101010;"></div>
<div style="position:absolute;left:73.6px;top:329.5900000000004px;width:5.58px;height:1.1px;background:#101010;"></div>
<div style="position:absolute;left:81.0px;top:329.5900000000004px;width:5.27px;height:1.1px;background:#101010;"></div>
<div style="position:absolute;left:88.6px;top:329.5900000000004px;width:5.0px;height:1.1px;background:#101010;"></div>
<div style="position:absolute;left:95.4px;top:329.5900000000004px;width:4.75px;height:1.1px;background:#101010;"></div>
<div style="position:absolute;left:104.2px;top:329.5900000000004px;width:3.7800000000000002px;height:1.1px;background:#101010;"></div>
<div style="position:absolute;left:112.8px;top:329.5900000000004px;width:7.99px;height:1.1px;background:#101010;"></div>
<div style="position:absolute;left:66px;top:331.2000000000004px;width:57px;height:2.16px;background:#c6d6ec;"></div>
<div style="position:absolute;left:67.2px;top:331.7500000000004px;width:5.04px;height:1.1px;background:#101010;"></div>
<div style="position:absolute;left:73.6px;top:331.7500000000004px;width:5.27px;height:1.1px;background:#101010;"></div>
<div style="position:absolute;left:81.0px;top:331.7500000000004px;width:6.2px;height:1.1px;background:#101010;"></div>
<div style="position:absolute;left:88.6px;top:331.7500000000004px;width:4.75px;height:1.1px;background:#101010;"></div>
<div style="position:absolute;left:95.4px;top:331.7500000000004px;width:4.5px;height:1.1px;background:#101010;"></div>
<div style="position:absolute;left:104.2px;top:331.7500000000004px;width:3.57px;height:1.1px;background:#101010;"></div>
<div style="position:absolute;left:112.8px;top:331.7500000000004px;width:9.4px;height:1.1px;background:#101010;"></div>
<div style="position:absolute;left:66px;top:333.3600000000004px;width:57px;height:2.16px;background:#b3c8e4;"></div>
<div style="position:absolute;left:67.2px;top:333.9100000000004px;width:4.76px;height:1.1px;background:#101010;"></div>
<div style="position:absolute;left:73.6px;top:333.9100000000004px;width:6.2px;height:1.1px;background:#101010;"></div>
<div style="position:absolute;left:81.0px;top:333.9100000000004px;width:5.89px;height:1.1px;background:#101010;"></div>
<div style="position:absolute;left:88.6px;top:333.9100000000004px;width:4.5px;height:1.1px;background:#101010;"></div>
<div style="position:absolute;left:95.4px;top:333.9100000000004px;width:4.25px;height:1.1px;background:#101010;"></div>
<div style="position:absolute;left:104.2px;top:333.9100000000004px;width:4.2px;height:1.1px;background:#101010;"></div>
<div style="position:absolute;left:112.8px;top:333.9100000000004px;width:8.93px;height:1.1px;background:#101010;"></div>
<div style="position:absolute;left:159px;top:150px;width:16px;height:237px;background:#f0f0f0;"></div>
<div style="position:absolute;left:160px;top:190px;width:14px;height:156px;background:#c8c8c8;"></div>
<svg style="position:absolute;left:161px;top:153px;" width="12" height="12" viewBox="0 0 12 12"><path d="M2.5,7.8 L6,4.3 L9.5,7.8" fill="none" stroke="#444" stroke-width="1.8"/></svg>
<svg style="position:absolute;left:161px;top:372px;" width="12" height="12" viewBox="0 0 12 12"><path d="M2.5,4 L6,7.5 L9.5,4" fill="none" stroke="#444" stroke-width="1.8"/></svg>
<div style="position:absolute;left:19px;top:387px;width:139px;height:15.5px;background:#f0f0f0;"></div>
<div style="position:absolute;left:36px;top:387.6px;width:94px;height:14.4px;background:#c8c8c8;"></div>
<svg style="position:absolute;left:21px;top:388px;" width="12" height="13" viewBox="0 0 12 13"><path d="M8,3 L4.5,6.5 L8,10" fill="none" stroke="#444" stroke-width="1.8"/></svg>
<svg style="position:absolute;left:143px;top:388px;" width="12" height="13" viewBox="0 0 12 13"><path d="M4,3 L7.5,6.5 L4,10" fill="none" stroke="#444" stroke-width="1.8"/></svg>
<div style="position:absolute;left:0;top:58px;width:780px;height:179px;overflow:hidden">
<div style="position:absolute;left:287px;top:-6.66px;width:357px;height:12.66px;background:#dce6f2"></div>
<div style="position:absolute;left:292px;top:-4.68px;font-size:9px;line-height:9px;font-weight:normal;color:#000;white-space:pre;-webkit-text-stroke:0.15px #000;">IT 部</div>
<div style="position:absolute;left:333.5px;top:-4.34px;font-size:8.6px;line-height:8.6px;font-weight:normal;color:#262626;white-space:pre;">华南地区</div>
<div style="position:absolute;left:379.5px;top:-4.34px;font-size:8.6px;line-height:8.6px;font-weight:normal;color:#262626;white-space:pre;">软件维护</div>
<div style="position:absolute;left:426.5px;top:-4.34px;font-size:8.6px;line-height:8.6px;font-weight:normal;color:#000;white-space:pre;-webkit-text-stroke:0.15px #000;">18,000</div>
<div style="position:absolute;left:472px;top:-4.34px;font-size:8.6px;line-height:8.6px;font-weight:normal;color:#000;white-space:pre;-webkit-text-stroke:0.15px #000;">17,500</div>
<div style="position:absolute;left:526px;top:-4.34px;font-size:8.6px;line-height:8.6px;font-weight:normal;color:#000;white-space:pre;-webkit-text-stroke:0.15px #000;">-500</div>
<div style="position:absolute;left:583.5px;top:-4.34px;font-size:8.6px;line-height:8.6px;font-weight:normal;color:#262626;white-space:pre;">成本下降</div>
<div style="position:absolute;left:287px;top:6.00px;width:357px;height:12.66px;background:#ffffff"></div>
<div style="position:absolute;left:292px;top:7.98px;font-size:9px;line-height:9px;font-weight:normal;color:#000;white-space:pre;-webkit-text-stroke:0.15px #000;">IT 部</div>
<div style="position:absolute;left:333.5px;top:8.32px;font-size:8.6px;line-height:8.6px;font-weight:normal;color:#262626;white-space:pre;">华南地区</div>
<div style="position:absolute;left:379.5px;top:8.32px;font-size:8.6px;line-height:8.6px;font-weight:normal;color:#262626;white-space:pre;">硬件采购</div>
<div style="position:absolute;left:426.5px;top:8.32px;font-size:8.6px;line-height:8.6px;font-weight:normal;color:#000;white-space:pre;-webkit-text-stroke:0.15px #000;">22,000</div>
<div style="position:absolute;left:472px;top:8.32px;font-size:8.6px;line-height:8.6px;font-weight:normal;color:#000;white-space:pre;-webkit-text-stroke:0.15px #000;">21,000</div>
<div style="position:absolute;left:526px;top:8.32px;font-size:8.6px;line-height:8.6px;font-weight:normal;color:#000;white-space:pre;-webkit-text-stroke:0.15px #000;">-1,000</div>
<div style="position:absolute;left:583.5px;top:8.32px;font-size:8.6px;line-height:8.6px;font-weight:normal;color:#262626;white-space:pre;">延期采购</div>
<div style="position:absolute;left:287px;top:18.66px;width:357px;height:12.66px;background:#dce6f2"></div>
<div style="position:absolute;left:292px;top:20.64px;font-size:9px;line-height:9px;font-weight:normal;color:#000;white-space:pre;-webkit-text-stroke:0.15px #000;">财务部</div>
<div style="position:absolute;left:333.5px;top:20.98px;font-size:8.6px;line-height:8.6px;font-weight:normal;color:#262626;white-space:pre;">华东地区</div>
<div style="position:absolute;left:379.5px;top:20.98px;font-size:8.6px;line-height:8.6px;font-weight:normal;color:#262626;white-space:pre;">审计费用</div>
<div style="position:absolute;left:426.5px;top:20.98px;font-size:8.6px;line-height:8.6px;font-weight:normal;color:#000;white-space:pre;-webkit-text-stroke:0.15px #000;">15,000</div>
<div style="position:absolute;left:472px;top:20.98px;font-size:8.6px;line-height:8.6px;font-weight:normal;color:#000;white-space:pre;-webkit-text-stroke:0.15px #000;">14,800</div>
<div style="position:absolute;left:526px;top:20.98px;font-size:8.6px;line-height:8.6px;font-weight:normal;color:#000;white-space:pre;-webkit-text-stroke:0.15px #000;">-200</div>
<div style="position:absolute;left:583.5px;top:20.98px;font-size:8.6px;line-height:8.6px;font-weight:normal;color:#262626;white-space:pre;">外包公司优惠</div>
<div style="position:absolute;left:287px;top:31.32px;width:357px;height:12.66px;background:#ffffff"></div>
<div style="position:absolute;left:292px;top:33.30px;font-size:9px;line-height:9px;font-weight:normal;color:#000;white-space:pre;-webkit-text-stroke:0.15px #000;">财务部</div>
<div style="position:absolute;left:333.5px;top:33.64px;font-size:8.6px;line-height:8.6px;font-weight:normal;color:#262626;white-space:pre;">华东地区</div>
<div style="position:absolute;left:379.5px;top:33.64px;font-size:8.6px;line-height:8.6px;font-weight:normal;color:#262626;white-space:pre;">办公用品</div>
<div style="position:absolute;left:426.5px;top:33.64px;font-size:8.6px;line-height:8.6px;font-weight:normal;color:#000;white-space:pre;-webkit-text-stroke:0.15px #000;">8,000</div>
<div style="position:absolute;left:472px;top:33.64px;font-size:8.6px;line-height:8.6px;font-weight:normal;color:#000;white-space:pre;-webkit-text-stroke:0.15px #000;">8,500</div>
<div style="position:absolute;left:526px;top:33.64px;font-size:8.6px;line-height:8.6px;font-weight:normal;color:#000;white-space:pre;-webkit-text-stroke:0.15px #000;">+500</div>
<div style="position:absolute;left:583.5px;top:33.64px;font-size:8.6px;line-height:8.6px;font-weight:normal;color:#262626;white-space:pre;">采购增加</div>
<div style="position:absolute;left:287px;top:43.98px;width:357px;height:12.66px;background:#dce6f2"></div>
<div style="position:absolute;left:292px;top:45.96px;font-size:9px;line-height:9px;font-weight:normal;color:#000;white-space:pre;-webkit-text-stroke:0.15px #000;">财务部</div>
<div style="position:absolute;left:333.5px;top:46.30px;font-size:8.6px;line-height:8.6px;font-weight:normal;color:#262626;white-space:pre;">华北地区</div>
<div style="position:absolute;left:379.5px;top:46.30px;font-size:8.6px;line-height:8.6px;font-weight:normal;color:#262626;white-space:pre;">审计费用</div>
<div style="position:absolute;left:426.5px;top:46.30px;font-size:8.6px;line-height:8.6px;font-weight:normal;color:#000;white-space:pre;-webkit-text-stroke:0.15px #000;">12,000</div>
<div style="position:absolute;left:472px;top:46.30px;font-size:8.6px;line-height:8.6px;font-weight:normal;color:#000;white-space:pre;-webkit-text-stroke:0.15px #000;">12,200</div>
<div style="position:absolute;left:526px;top:46.30px;font-size:8.6px;line-height:8.6px;font-weight:normal;color:#000;white-space:pre;-webkit-text-stroke:0.15px #000;">+200</div>
<div style="position:absolute;left:583.5px;top:46.30px;font-size:8.6px;line-height:8.6px;font-weight:normal;color:#262626;white-space:pre;">临时加项</div>
<div style="position:absolute;left:287px;top:56.64px;width:357px;height:12.66px;background:#ffffff"></div>
<div style="position:absolute;left:292px;top:58.62px;font-size:9px;line-height:9px;font-weight:normal;color:#000;white-space:pre;-webkit-text-stroke:0.15px #000;">财务部</div>
<div style="position:absolute;left:333.5px;top:58.96px;font-size:8.6px;line-height:8.6px;font-weight:normal;color:#262626;white-space:pre;">华北地区</div>
<div style="position:absolute;left:379.5px;top:58.96px;font-size:8.6px;line-height:8.6px;font-weight:normal;color:#262626;white-space:pre;">办公用品</div>
<div style="position:absolute;left:426.5px;top:58.96px;font-size:8.6px;line-height:8.6px;font-weight:normal;color:#000;white-space:pre;-webkit-text-stroke:0.15px #000;">7,000</div>
<div style="position:absolute;left:472px;top:58.96px;font-size:8.6px;line-height:8.6px;font-weight:normal;color:#000;white-space:pre;-webkit-text-stroke:0.15px #000;">6,800</div>
<div style="position:absolute;left:526px;top:58.96px;font-size:8.6px;line-height:8.6px;font-weight:normal;color:#000;white-space:pre;-webkit-text-stroke:0.15px #000;">-200</div>
<div style="position:absolute;left:583.5px;top:58.96px;font-size:8.6px;line-height:8.6px;font-weight:normal;color:#262626;white-space:pre;">控制消耗</div>
<div style="position:absolute;left:287px;top:69.30px;width:357px;height:12.66px;background:#dce6f2"></div>
<div style="position:absolute;left:292px;top:71.28px;font-size:9px;line-height:9px;font-weight:normal;color:#000;white-space:pre;-webkit-text-stroke:0.15px #000;">财务部</div>
<div style="position:absolute;left:333.5px;top:71.62px;font-size:8.6px;line-height:8.6px;font-weight:normal;color:#262626;white-space:pre;">华南地区</div>
<div style="position:absolute;left:379.5px;top:71.62px;font-size:8.6px;line-height:8.6px;font-weight:normal;color:#262626;white-space:pre;">审计费用</div>
<div style="position:absolute;left:426.5px;top:71.62px;font-size:8.6px;line-height:8.6px;font-weight:normal;color:#000;white-space:pre;-webkit-text-stroke:0.15px #000;">11,000</div>
<div style="position:absolute;left:472px;top:71.62px;font-size:8.6px;line-height:8.6px;font-weight:normal;color:#000;white-space:pre;-webkit-text-stroke:0.15px #000;">10,500</div>
<div style="position:absolute;left:526px;top:71.62px;font-size:8.6px;line-height:8.6px;font-weight:normal;color:#000;white-space:pre;-webkit-text-stroke:0.15px #000;">-500</div>
<div style="position:absolute;left:583.5px;top:71.62px;font-size:8.6px;line-height:8.6px;font-weight:normal;color:#262626;white-space:pre;">谈判降低费用</div>
<div style="position:absolute;left:287px;top:81.96px;width:357px;height:12.66px;background:#ffffff"></div>
<div style="position:absolute;left:292px;top:83.94px;font-size:9px;line-height:9px;font-weight:normal;color:#000;white-space:pre;-webkit-text-stroke:0.15px #000;">财务部</div>
<div style="position:absolute;left:333.5px;top:84.28px;font-size:8.6px;line-height:8.6px;font-weight:normal;color:#262626;white-space:pre;">华南地区</div>
<div style="position:absolute;left:379.5px;top:84.28px;font-size:8.6px;line-height:8.6px;font-weight:normal;color:#262626;white-space:pre;">办公用品</div>
<div style="position:absolute;left:426.5px;top:84.28px;font-size:8.6px;line-height:8.6px;font-weight:normal;color:#000;white-space:pre;-webkit-text-stroke:0.15px #000;">6,000</div>
<div style="position:absolute;left:472px;top:84.28px;font-size:8.6px;line-height:8.6px;font-weight:normal;color:#000;white-space:pre;-webkit-text-stroke:0.15px #000;">6,200</div>
<div style="position:absolute;left:526px;top:84.28px;font-size:8.6px;line-height:8.6px;font-weight:normal;color:#000;white-space:pre;-webkit-text-stroke:0.15px #000;">+200</div>
<div style="position:absolute;left:583.5px;top:84.28px;font-size:8.6px;line-height:8.6px;font-weight:normal;color:#262626;white-space:pre;">打印耗材增加</div>
<div style="position:absolute;left:287px;top:94.62px;width:357px;height:12.66px;background:#dce6f2"></div>
<div style="position:absolute;left:292px;top:96.60px;font-size:9px;line-height:9px;font-weight:normal;color:#000;white-space:pre;-webkit-text-stroke:0.15px #000;">运营部</div>
<div style="position:absolute;left:333.5px;top:96.94px;font-size:8.6px;line-height:8.6px;font-weight:normal;color:#262626;white-space:pre;">华东地区</div>
<div style="position:absolute;left:379.5px;top:96.94px;font-size:8.6px;line-height:8.6px;font-weight:normal;color:#262626;white-space:pre;">仓储费用</div>
<div style="position:absolute;left:426.5px;top:96.94px;font-size:8.6px;line-height:8.6px;font-weight:normal;color:#000;white-space:pre;-webkit-text-stroke:0.15px #000;">40,000</div>
<div style="position:absolute;left:472px;top:96.94px;font-size:8.6px;line-height:8.6px;font-weight:normal;color:#000;white-space:pre;-webkit-text-stroke:0.15px #000;">41,000</div>
<div style="position:absolute;left:526px;top:96.94px;font-size:8.6px;line-height:8.6px;font-weight:normal;color:#000;white-space:pre;-webkit-text-stroke:0.15px #000;">+1,000</div>
<div style="position:absolute;left:583.5px;top:96.94px;font-size:8.6px;line-height:8.6px;font-weight:normal;color:#262626;white-space:pre;">仓库租金上涨</div>
<div style="position:absolute;left:287px;top:-7.16px;width:358px;height:1.2px;background:#a9c0dd"></div>
<div style="position:absolute;left:287px;top:5.50px;width:358px;height:1.2px;background:#a9c0dd"></div>
<div style="position:absolute;left:287px;top:18.16px;width:358px;height:1.2px;background:#a9c0dd"></div>
<div style="position:absolute;left:287px;top:30.82px;width:358px;height:1.2px;background:#a9c0dd"></div>
<div style="position:absolute;left:287px;top:43.48px;width:358px;height:1.2px;background:#a9c0dd"></div>
<div style="position:absolute;left:287px;top:56.14px;width:358px;height:1.2px;background:#a9c0dd"></div>
<div style="position:absolute;left:287px;top:68.80px;width:358px;height:1.2px;background:#a9c0dd"></div>
<div style="position:absolute;left:287px;top:81.46px;width:358px;height:1.2px;background:#a9c0dd"></div>
<div style="position:absolute;left:287px;top:94.12px;width:358px;height:1.2px;background:#a9c0dd"></div>
<div style="position:absolute;left:287px;top:106.78px;width:358px;height:1.2px;background:#a9c0dd"></div>
<div style="position:absolute;left:287px;top:-6.66px;width:1px;height:113.94px;background:#a9c0dd"></div>
<div style="position:absolute;left:328px;top:-6.66px;width:1px;height:113.94px;background:#a9c0dd"></div>
<div style="position:absolute;left:375px;top:-6.66px;width:1px;height:113.94px;background:#a9c0dd"></div>
<div style="position:absolute;left:422px;top:-6.66px;width:1px;height:113.94px;background:#a9c0dd"></div>
<div style="position:absolute;left:468px;top:-6.66px;width:1px;height:113.94px;background:#a9c0dd"></div>
<div style="position:absolute;left:521px;top:-6.66px;width:1px;height:113.94px;background:#a9c0dd"></div>
<div style="position:absolute;left:579px;top:-6.66px;width:1px;height:113.94px;background:#a9c0dd"></div>
<div style="position:absolute;left:644px;top:-6.66px;width:1px;height:113.94px;background:#a9c0dd"></div>
</div>
<div style="position:absolute;left:0;top:244px;width:780px;height:161px;overflow:hidden">
<div style="position:absolute;left:287px;top:59.60px;width:357px;height:12.66px;background:#ffffff"></div>
<div style="position:absolute;left:292px;top:61.58px;font-size:9px;line-height:9px;font-weight:normal;color:#000;white-space:pre;-webkit-text-stroke:0.15px #000;">运营部</div>
<div style="position:absolute;left:333.5px;top:61.92px;font-size:8.6px;line-height:8.6px;font-weight:normal;color:#262626;white-space:pre;">华东地区</div>
<div style="position:absolute;left:379.5px;top:61.92px;font-size:8.6px;line-height:8.6px;font-weight:normal;color:#262626;white-space:pre;">物流费用</div>
<div style="position:absolute;left:426.5px;top:61.92px;font-size:8.6px;line-height:8.6px;font-weight:normal;color:#000;white-space:pre;-webkit-text-stroke:0.15px #000;">45,000</div>
<div style="position:absolute;left:472px;top:61.92px;font-size:8.6px;line-height:8.6px;font-weight:normal;color:#000;white-space:pre;-webkit-text-stroke:0.15px #000;">46,200</div>
<div style="position:absolute;left:526px;top:61.92px;font-size:8.6px;line-height:8.6px;font-weight:normal;color:#000;white-space:pre;-webkit-text-stroke:0.15px #000;">+1,200</div>
<div style="position:absolute;left:583.5px;top:61.92px;font-size:8.6px;line-height:8.6px;font-weight:normal;color:#262626;white-space:pre;">运费上涨</div>
<div style="position:absolute;left:287px;top:72.26px;width:357px;height:12.66px;background:#dce6f2"></div>
<div style="position:absolute;left:292px;top:74.24px;font-size:9px;line-height:9px;font-weight:normal;color:#000;white-space:pre;-webkit-text-stroke:0.15px #000;">运营部</div>
<div style="position:absolute;left:333.5px;top:74.58px;font-size:8.6px;line-height:8.6px;font-weight:normal;color:#262626;white-space:pre;">华北地区</div>
<div style="position:absolute;left:379.5px;top:74.58px;font-size:8.6px;line-height:8.6px;font-weight:normal;color:#262626;white-space:pre;">仓储费用</div>
<div style="position:absolute;left:426.5px;top:74.58px;font-size:8.6px;line-height:8.6px;font-weight:normal;color:#000;white-space:pre;-webkit-text-stroke:0.15px #000;">35,000</div>
<div style="position:absolute;left:472px;top:74.58px;font-size:8.6px;line-height:8.6px;font-weight:normal;color:#000;white-space:pre;-webkit-text-stroke:0.15px #000;">34,500</div>
<div style="position:absolute;left:526px;top:74.58px;font-size:8.6px;line-height:8.6px;font-weight:normal;color:#000;white-space:pre;-webkit-text-stroke:0.15px #000;">-500</div>
<div style="position:absolute;left:583.5px;top:74.58px;font-size:8.6px;line-height:8.6px;font-weight:normal;color:#262626;white-space:pre;">成本下降</div>
<div style="position:absolute;left:287px;top:84.92px;width:357px;height:12.66px;background:#ffffff"></div>
<div style="position:absolute;left:292px;top:86.90px;font-size:9px;line-height:9px;font-weight:normal;color:#000;white-space:pre;-webkit-text-stroke:0.15px #000;">运营部</div>
<div style="position:absolute;left:333.5px;top:87.24px;font-size:8.6px;line-height:8.6px;font-weight:normal;color:#262626;white-space:pre;">华北地区</div>
<div style="position:absolute;left:379.5px;top:87.24px;font-size:8.6px;line-height:8.6px;font-weight:normal;color:#262626;white-space:pre;">物流费用</div>
<div style="position:absolute;left:426.5px;top:87.24px;font-size:8.6px;line-height:8.6px;font-weight:normal;color:#000;white-space:pre;-webkit-text-stroke:0.15px #000;">38,000</div>
<div style="position:absolute;left:472px;top:87.24px;font-size:8.6px;line-height:8.6px;font-weight:normal;color:#000;white-space:pre;-webkit-text-stroke:0.15px #000;">39,000</div>
<div style="position:absolute;left:526px;top:87.24px;font-size:8.6px;line-height:8.6px;font-weight:normal;color:#000;white-space:pre;-webkit-text-stroke:0.15px #000;">+1,000</div>
<div style="position:absolute;left:583.5px;top:87.24px;font-size:8.6px;line-height:8.6px;font-weight:normal;color:#262626;white-space:pre;">新线路调整</div>
<div style="position:absolute;left:287px;top:97.58px;width:357px;height:12.66px;background:#dce6f2"></div>
<div style="position:absolute;left:292px;top:99.56px;font-size:9px;line-height:9px;font-weight:normal;color:#000;white-space:pre;-webkit-text-stroke:0.15px #000;">运营部</div>
<div style="position:absolute;left:333.5px;top:99.90px;font-size:8.6px;line-height:8.6px;font-weight:normal;color:#262626;white-space:pre;">华南地区</div>
<div style="position:absolute;left:379.5px;top:99.90px;font-size:8.6px;line-height:8.6px;font-weight:normal;color:#262626;white-space:pre;">仓储费用</div>
<div style="position:absolute;left:426.5px;top:99.90px;font-size:8.6px;line-height:8.6px;font-weight:normal;color:#000;white-space:pre;-webkit-text-stroke:0.15px #000;">33,000</div>
<div style="position:absolute;left:472px;top:99.90px;font-size:8.6px;line-height:8.6px;font-weight:normal;color:#000;white-space:pre;-webkit-text-stroke:0.15px #000;">32,000</div>
<div style="position:absolute;left:526px;top:99.90px;font-size:8.6px;line-height:8.6px;font-weight:normal;color:#000;white-space:pre;-webkit-text-stroke:0.15px #000;">-1,000</div>
<div style="position:absolute;left:583.5px;top:99.90px;font-size:8.6px;line-height:8.6px;font-weight:normal;color:#262626;white-space:pre;">优惠合同</div>
<div style="position:absolute;left:287px;top:110.24px;width:357px;height:12.66px;background:#ffffff"></div>
<div style="position:absolute;left:292px;top:112.22px;font-size:9px;line-height:9px;font-weight:normal;color:#000;white-space:pre;-webkit-text-stroke:0.15px #000;">运营部</div>
<div style="position:absolute;left:333.5px;top:112.56px;font-size:8.6px;line-height:8.6px;font-weight:normal;color:#262626;white-space:pre;">华南地区</div>
<div style="position:absolute;left:379.5px;top:112.56px;font-size:8.6px;line-height:8.6px;font-weight:normal;color:#262626;white-space:pre;">物流费用</div>
<div style="position:absolute;left:426.5px;top:112.56px;font-size:8.6px;line-height:8.6px;font-weight:normal;color:#000;white-space:pre;-webkit-text-stroke:0.15px #000;">36,000</div>
<div style="position:absolute;left:472px;top:112.56px;font-size:8.6px;line-height:8.6px;font-weight:normal;color:#000;white-space:pre;-webkit-text-stroke:0.15px #000;">37,500</div>
<div style="position:absolute;left:526px;top:112.56px;font-size:8.6px;line-height:8.6px;font-weight:normal;color:#000;white-space:pre;-webkit-text-stroke:0.15px #000;">+1,500</div>
<div style="position:absolute;left:583.5px;top:112.56px;font-size:8.6px;line-height:8.6px;font-weight:normal;color:#262626;white-space:pre;">燃油费上涨</div>
<div style="position:absolute;left:287px;top:122.90px;width:357px;height:12.66px;background:#dce6f2"></div>
<div style="position:absolute;left:292px;top:124.88px;font-size:9px;line-height:9px;font-weight:normal;color:#000;white-space:pre;-webkit-text-stroke:0.15px #000;">研发部</div>
<div style="position:absolute;left:333.5px;top:125.22px;font-size:8.6px;line-height:8.6px;font-weight:normal;color:#262626;white-space:pre;">华东地区</div>
<div style="position:absolute;left:379.5px;top:125.22px;font-size:8.6px;line-height:8.6px;font-weight:normal;color:#262626;white-space:pre;">材料采购</div>
<div style="position:absolute;left:426.5px;top:125.22px;font-size:8.6px;line-height:8.6px;font-weight:normal;color:#000;white-space:pre;-webkit-text-stroke:0.15px #000;">28,000</div>
<div style="position:absolute;left:472px;top:125.22px;font-size:8.6px;line-height:8.6px;font-weight:normal;color:#000;white-space:pre;-webkit-text-stroke:0.15px #000;">29,000</div>
<div style="position:absolute;left:526px;top:125.22px;font-size:8.6px;line-height:8.6px;font-weight:normal;color:#000;white-space:pre;-webkit-text-stroke:0.15px #000;">+1,000</div>
<div style="position:absolute;left:583.5px;top:125.22px;font-size:8.6px;line-height:8.6px;font-weight:normal;color:#262626;white-space:pre;">新实验材料</div>
<div style="position:absolute;left:287px;top:135.56px;width:357px;height:12.66px;background:#ffffff"></div>
<div style="position:absolute;left:292px;top:137.54px;font-size:9px;line-height:9px;font-weight:normal;color:#000;white-space:pre;-webkit-text-stroke:0.15px #000;">研发部</div>
<div style="position:absolute;left:333.5px;top:137.88px;font-size:8.6px;line-height:8.6px;font-weight:normal;color:#262626;white-space:pre;">华东地区</div>
<div style="position:absolute;left:379.5px;top:137.88px;font-size:8.6px;line-height:8.6px;font-weight:normal;color:#262626;white-space:pre;">外包研发</div>
<div style="position:absolute;left:426.5px;top:137.88px;font-size:8.6px;line-height:8.6px;font-weight:normal;color:#000;white-space:pre;-webkit-text-stroke:0.15px #000;">32,000</div>
<div style="position:absolute;left:472px;top:137.88px;font-size:8.6px;line-height:8.6px;font-weight:normal;color:#000;white-space:pre;-webkit-text-stroke:0.15px #000;">33,500</div>
<div style="position:absolute;left:526px;top:137.88px;font-size:8.6px;line-height:8.6px;font-weight:normal;color:#000;white-space:pre;-webkit-text-stroke:0.15px #000;">+1,500</div>
<div style="position:absolute;left:583.5px;top:137.88px;font-size:8.6px;line-height:8.6px;font-weight:normal;color:#262626;white-space:pre;">项目外包增加</div>
<div style="position:absolute;left:287px;top:148.22px;width:357px;height:12.66px;background:#dce6f2"></div>
<div style="position:absolute;left:292px;top:150.20px;font-size:9px;line-height:9px;font-weight:normal;color:#000;white-space:pre;-webkit-text-stroke:0.15px #000;">研发部</div>
<div style="position:absolute;left:333.5px;top:150.54px;font-size:8.6px;line-height:8.6px;font-weight:normal;color:#262626;white-space:pre;">华北地区</div>
<div style="position:absolute;left:379.5px;top:150.54px;font-size:8.6px;line-height:8.6px;font-weight:normal;color:#262626;white-space:pre;">材料采购</div>
<div style="position:absolute;left:426.5px;top:150.54px;font-size:8.6px;line-height:8.6px;font-weight:normal;color:#000;white-space:pre;-webkit-text-stroke:0.15px #000;">25,000</div>
<div style="position:absolute;left:472px;top:150.54px;font-size:8.6px;line-height:8.6px;font-weight:normal;color:#000;white-space:pre;-webkit-text-stroke:0.15px #000;">24,500</div>
<div style="position:absolute;left:526px;top:150.54px;font-size:8.6px;line-height:8.6px;font-weight:normal;color:#000;white-space:pre;-webkit-text-stroke:0.15px #000;">-500</div>
<div style="position:absolute;left:583.5px;top:150.54px;font-size:8.6px;line-height:8.6px;font-weight:normal;color:#262626;white-space:pre;">成本下降</div>
<div style="position:absolute;left:287px;top:59.10px;width:358px;height:1.2px;background:#a9c0dd"></div>
<div style="position:absolute;left:287px;top:71.76px;width:358px;height:1.2px;background:#a9c0dd"></div>
<div style="position:absolute;left:287px;top:84.42px;width:358px;height:1.2px;background:#a9c0dd"></div>
<div style="position:absolute;left:287px;top:97.08px;width:358px;height:1.2px;background:#a9c0dd"></div>
<div style="position:absolute;left:287px;top:109.74px;width:358px;height:1.2px;background:#a9c0dd"></div>
<div style="position:absolute;left:287px;top:122.40px;width:358px;height:1.2px;background:#a9c0dd"></div>
<div style="position:absolute;left:287px;top:135.06px;width:358px;height:1.2px;background:#a9c0dd"></div>
<div style="position:absolute;left:287px;top:147.72px;width:358px;height:1.2px;background:#a9c0dd"></div>
<div style="position:absolute;left:287px;top:160.38px;width:358px;height:1.2px;background:#a9c0dd"></div>
<div style="position:absolute;left:287px;top:59.60px;width:1px;height:101.28px;background:#a9c0dd"></div>
<div style="position:absolute;left:328px;top:59.60px;width:1px;height:101.28px;background:#a9c0dd"></div>
<div style="position:absolute;left:375px;top:59.60px;width:1px;height:101.28px;background:#a9c0dd"></div>
<div style="position:absolute;left:422px;top:59.60px;width:1px;height:101.28px;background:#a9c0dd"></div>
<div style="position:absolute;left:468px;top:59.60px;width:1px;height:101.28px;background:#a9c0dd"></div>
<div style="position:absolute;left:521px;top:59.60px;width:1px;height:101.28px;background:#a9c0dd"></div>
<div style="position:absolute;left:579px;top:59.60px;width:1px;height:101.28px;background:#a9c0dd"></div>
<div style="position:absolute;left:644px;top:59.60px;width:1px;height:101.28px;background:#a9c0dd"></div>
</div>
<div style="position:absolute;left:15px;top:15px;width:749px;height:2px;background:#0b7ff0;"></div>
<div style="position:absolute;left:15px;top:15px;width:2px;height:392px;background:#0b7ff0;"></div>
<div style="position:absolute;left:762px;top:15px;width:2px;height:392px;background:#0b7ff0;"></div>
<div style="position:absolute;left:15px;top:405px;width:749px;height:2px;background:#0b7ff0;"></div>
<svg style="position:absolute;left:372px;top:402px;" width="38" height="24" viewBox="0 0 38 24"><path d="M5.5,5.8 L19,19.6 L32.5,5.8" fill="none" stroke="#000" stroke-width="3.5"/></svg>
<div style="position:absolute;left:17px;top:423px;width:745px;height:28px;background:#f5f5f5;"></div>
<div style="position:absolute;left:167px;top:423px;width:1px;height:28px;background:#e6e6e6;"></div>
<div style="position:absolute;left:17px;top:451px;width:745px;height:1px;background:#e5e5e5;"></div>
<div style="position:absolute;left:17px;top:423px;width:150px;height:29px;background:#ffffff;"></div>
<svg style="position:absolute;left:19px;top:428px;" width="14" height="14" viewBox="0 0 14 14"><rect x="1" y="1" width="11.6" height="11.3" fill="#6a9f42"/><path d="M2.8,4.4 H5.9 M7.7,4.4 H10.8 M2.8,7 H5.9 M7.7,7 H10.8 M2.8,9.6 H5.9 M7.7,9.6 H10.8" stroke="#cfe3bf" stroke-width="1.2"/></svg>
<div style="position:absolute;left:37.60px;top:429.67px;font-size:12.2px;line-height:12.2px;color:#333333;font-weight:normal;letter-spacing:0.091px;white-space:pre;">MergedTables.csv</div>
<svg style="position:absolute;left:146px;top:429px;" width="14" height="14" viewBox="0 0 14 14"><path d="M3,3 L11.4,11.4 M11.4,3 L3,11.4" stroke="#444" stroke-width="1.3"/></svg>
<svg style="position:absolute;left:690px;top:426px;" width="20" height="18" viewBox="0 0 20 18"><rect x="3.5" y="3" width="12" height="11.5" rx="1.2" fill="none" stroke="#424242" stroke-width="1.3"/><path d="M9.5,3 V14.5" stroke="#424242" stroke-width="1.3"/></svg>
<svg style="position:absolute;left:715px;top:426px;" width="20" height="18" viewBox="0 0 20 18"><rect x="4" y="8.5" width="11.5" height="7" rx="1" fill="none" stroke="#424242" stroke-width="1.3"/><path d="M6.5,8.5 V6.2 Q6.5,2.8 9.8,2.8 Q12.6,2.8 13,5.2" fill="none" stroke="#424242" stroke-width="1.3"/></svg>
<svg style="position:absolute;left:742px;top:430px;" width="20" height="10" viewBox="0 0 20 10"><circle cx="4.5" cy="5" r="1.1" fill="#424242"/><circle cx="9.3" cy="5" r="1.1" fill="#424242"/><circle cx="14.1" cy="5" r="1.1" fill="#424242"/></svg>
<div style="position:absolute;left:22.29px;top:457.64px;font-size:12px;line-height:12px;color:#616161;font-weight:normal;letter-spacing:-0.995px;white-space:pre;">C:</div>
<svg style="position:absolute;left:37.6px;top:457px;" width="8" height="13" viewBox="0 0 8 13"><path d="M1.5,2 L6,6.5 L1.5,11" fill="none" stroke="#616161" stroke-width="1.1"/></svg>
<div style="position:absolute;left:48.87px;top:457.64px;font-size:12px;line-height:12px;color:#616161;font-weight:normal;letter-spacing:0.131px;white-space:pre;">Users</div>
<svg style="position:absolute;left:85.3px;top:457px;" width="8" height="13" viewBox="0 0 8 13"><path d="M1.5,2 L6,6.5 L1.5,11" fill="none" stroke="#616161" stroke-width="1.1"/></svg>
<div style="position:absolute;left:96.26px;top:457.64px;font-size:12px;line-height:12px;color:#616161;font-weight:normal;letter-spacing:0.449px;white-space:pre;">Sirion</div>
<svg style="position:absolute;left:133.5px;top:457px;" width="8" height="13" viewBox="0 0 8 13"><path d="M1.5,2 L6,6.5 L1.5,11" fill="none" stroke="#616161" stroke-width="1.1"/></svg>
<div style="position:absolute;left:143.89px;top:457.64px;font-size:12px;line-height:12px;color:#616161;font-weight:normal;letter-spacing:0.367px;white-space:pre;">IdeaProjects</div>
<svg style="position:absolute;left:219.6px;top:457px;" width="8" height="13" viewBox="0 0 8 13"><path d="M1.5,2 L6,6.5 L1.5,11" fill="none" stroke="#616161" stroke-width="1.1"/></svg>
<div style="position:absolute;left:230.22px;top:457.64px;font-size:12px;line-height:12px;color:#616161;font-weight:normal;letter-spacing:0.865px;white-space:pre;">untitled</div>
<svg style="position:absolute;left:279.9px;top:457px;" width="8" height="13" viewBox="0 0 8 13"><path d="M1.5,2 L6,6.5 L1.5,11" fill="none" stroke="#616161" stroke-width="1.1"/></svg>
<div style="position:absolute;left:291.00px;top:457.64px;font-size:12px;line-height:12px;color:#616161;font-weight:normal;letter-spacing:0.986px;white-space:pre;">output</div>
<svg style="position:absolute;left:335.7px;top:457px;" width="8" height="13" viewBox="0 0 8 13"><path d="M1.5,2 L6,6.5 L1.5,11" fill="none" stroke="#616161" stroke-width="1.1"/></svg>
<svg style="position:absolute;left:348px;top:457px;" width="14" height="13" viewBox="0 0 14 13"><rect x="1" y="0.8" width="11.6" height="11.3" fill="#6a9f42"/><path d="M2.8,4.2 H5.9 M7.7,4.2 H10.8 M2.8,6.8 H5.9 M7.7,6.8 H10.8 M2.8,9.4 H5.9 M7.7,9.4 H10.8" stroke="#cfe3bf" stroke-width="1.2"/></svg>
<div style="position:absolute;left:367.02px;top:457.64px;font-size:12px;line-height:12px;color:#616161;font-weight:normal;letter-spacing:0.226px;white-space:pre;">MergedTables.csv</div>
<svg style="position:absolute;left:474.2px;top:457px;" width="8" height="13" viewBox="0 0 8 13"><path d="M1.5,2 L6,6.5 L1.5,11" fill="none" stroke="#616161" stroke-width="1.1"/></svg>
<svg style="position:absolute;left:485px;top:456px;" width="15" height="15" viewBox="0 0 15 15"><path d="M2,1 H8.5 L12.5,5 V14 H2 Z M8.5,1 V5 H12.5" fill="none" stroke="#424242" stroke-width="1.1"/></svg>
<div style="position:absolute;left:503.80px;top:457.64px;font-size:12px;line-height:12px;color:#616161;font-weight:normal;letter-spacing:0.183px;white-space:pre;">data</div>
<div style="position:absolute;left:32.36px;top:485.22px;font-size:12.867px;line-height:12.867px;color:#6e7681;font-family:'Liberation Mono',monospace;white-space:pre">25</div>
<div style="position:absolute;left:74.30px;top:485.22px;font-size:12.867px;line-height:12.867px;color:#3b3b3b;font-family:'Liberation Mono',monospace;white-space:pre">IT </div>
<div class="cj" style="left:97.46px;top:481.83px;color:#3b3b3b"><i>部</i></div>
<div style="position:absolute;left:111.41px;top:485.22px;font-size:12.867px;line-height:12.867px;color:#3b3b3b;font-family:'Liberation Mono',monospace;white-space:pre"> ,</div>
<div class="cj" style="left:126.85px;top:481.83px;color:#0000ff"><i>华</i><i>南</i><i>地</i><i>区</i></div>
<div style="position:absolute;left:182.65px;top:485.22px;font-size:12.867px;line-height:12.867px;color:#0000ff;font-family:'Liberation Mono',monospace;white-space:pre"> ,</div>
<div class="cj" style="left:198.09px;top:481.83px;color:#795e26"><i>硬</i><i>件</i><i>采</i><i>购</i></div>
<div style="position:absolute;left:253.89px;top:485.22px;font-size:12.867px;line-height:12.867px;color:#795e26;font-family:'Liberation Mono',monospace;white-space:pre"> ,</div>
<div style="position:absolute;left:269.33px;top:485.22px;font-size:12.867px;line-height:12.867px;color:#008000;font-family:'Liberation Mono',monospace;white-space:pre">"22,000 ",</div>
<div style="position:absolute;left:346.53px;top:485.22px;font-size:12.867px;line-height:12.867px;color:#a31515;font-family:'Liberation Mono',monospace;white-space:pre">"21,000 ",</div>
<div style="position:absolute;left:423.73px;top:485.22px;font-size:12.867px;line-height:12.867px;color:#001080;font-family:'Liberation Mono',monospace;white-space:pre">"-1,000 ",</div>
<div class="cj" style="left:500.93px;top:481.83px;color:#098658"><i>延</i><i>期</i><i>采</i><i>购</i></div>
<div style="position:absolute;left:32.36px;top:504.24px;font-size:12.867px;line-height:12.867px;color:#6e7681;font-family:'Liberation Mono',monospace;white-space:pre">26</div>
<div class="cj" style="left:74.30px;top:500.85px;color:#3b3b3b"><i>财</i><i>务</i><i>部</i></div>
<div style="position:absolute;left:116.15px;top:504.24px;font-size:12.867px;line-height:12.867px;color:#3b3b3b;font-family:'Liberation Mono',monospace;white-space:pre"> ,</div>
<div class="cj" style="left:131.59px;top:500.85px;color:#0000ff"><i>华</i><i>东</i><i>地</i><i>区</i></div>
<div style="position:absolute;left:187.39px;top:504.24px;font-size:12.867px;line-height:12.867px;color:#0000ff;font-family:'Liberation Mono',monospace;white-space:pre"> ,</div>
<div class="cj" style="left:202.83px;top:500.85px;color:#795e26"><i>审</i><i>计</i><i>费</i><i>用</i></div>
<div style="position:absolute;left:258.63px;top:504.24px;font-size:12.867px;line-height:12.867px;color:#795e26;font-family:'Liberation Mono',monospace;white-space:pre"> ,</div>
<div style="position:absolute;left:274.07px;top:504.24px;font-size:12.867px;line-height:12.867px;color:#008000;font-family:'Liberation Mono',monospace;white-space:pre">"15,000 ",</div>
<div style="position:absolute;left:351.27px;top:504.24px;font-size:12.867px;line-height:12.867px;color:#a31515;font-family:'Liberation Mono',monospace;white-space:pre">"14,800 ",</div>
<div style="position:absolute;left:428.47px;top:504.24px;font-size:12.867px;line-height:12.867px;color:#001080;font-family:'Liberation Mono',monospace;white-space:pre">-200 ,</div>
<div class="cj" style="left:474.79px;top:500.85px;color:#098658"><i>外</i><i>包</i><i>公</i><i>司</i><i>优</i><i>惠</i></div>
<div style="position:absolute;left:32.36px;top:523.26px;font-size:12.867px;line-height:12.867px;color:#6e7681;font-family:'Liberation Mono',monospace;white-space:pre">27</div>
<div class="cj" style="left:74.30px;top:519.87px;color:#3b3b3b"><i>财</i><i>务</i><i>部</i></div>
<div style="position:absolute;left:116.15px;top:523.26px;font-size:12.867px;line-height:12.867px;color:#3b3b3b;font-family:'Liberation Mono',monospace;white-space:pre"> ,</div>
<div class="cj" style="left:131.59px;top:519.87px;color:#0000ff"><i>华</i><i>东</i><i>地</i><i>区</i></div>
<div style="position:absolute;left:187.39px;top:523.26px;font-size:12.867px;line-height:12.867px;color:#0000ff;font-family:'Liberation Mono',monospace;white-space:pre"> ,</div>
<div class="cj" style="left:202.83px;top:519.87px;color:#795e26"><i>办</i><i>公</i><i>用</i><i>品</i></div>
<div style="position:absolute;left:258.63px;top:523.26px;font-size:12.867px;line-height:12.867px;color:#795e26;font-family:'Liberation Mono',monospace;white-space:pre"> ,</div>
<div style="position:absolute;left:274.07px;top:523.26px;font-size:12.867px;line-height:12.867px;color:#008000;font-family:'Liberation Mono',monospace;white-space:pre">"8,000 ",</div>
<div style="position:absolute;left:343.55px;top:523.26px;font-size:12.867px;line-height:12.867px;color:#a31515;font-family:'Liberation Mono',monospace;white-space:pre">"8,500 ",</div>
<div style="position:absolute;left:413.03px;top:523.26px;font-size:12.867px;line-height:12.867px;color:#001080;font-family:'Liberation Mono',monospace;white-space:pre">+500 ,</div>
<div class="cj" style="left:459.35px;top:519.87px;color:#098658"><i>采</i><i>购</i><i>增</i><i>加</i></div>
<div style="position:absolute;left:32.36px;top:542.28px;font-size:12.867px;line-height:12.867px;color:#6e7681;font-family:'Liberation Mono',monospace;white-space:pre">28</div>
<div class="cj" style="left:74.30px;top:538.89px;color:#3b3b3b"><i>财</i><i>务</i><i>部</i></div>
<div style="position:absolute;left:116.15px;top:542.28px;font-size:12.867px;line-height:12.867px;color:#3b3b3b;font-family:'Liberation Mono',monospace;white-space:pre"> ,</div>
<div class="cj" style="left:131.59px;top:538.89px;color:#0000ff"><i>华</i><i>北</i><i>地</i><i>区</i></div>
<div style="position:absolute;left:187.39px;top:542.28px;font-size:12.867px;line-height:12.867px;color:#0000ff;font-family:'Liberation Mono',monospace;white-space:pre"> ,</div>
<div class="cj" style="left:202.83px;top:538.89px;color:#795e26"><i>审</i><i>计</i><i>费</i><i>用</i></div>
<div style="position:absolute;left:258.63px;top:542.28px;font-size:12.867px;line-height:12.867px;color:#795e26;font-family:'Liberation Mono',monospace;white-space:pre"> ,</div>
<div style="position:absolute;left:274.07px;top:542.28px;font-size:12.867px;line-height:12.867px;color:#008000;font-family:'Liberation Mono',monospace;white-space:pre">"12,000 ",</div>
<div style="position:absolute;left:351.27px;top:542.28px;font-size:12.867px;line-height:12.867px;color:#a31515;font-family:'Liberation Mono',monospace;white-space:pre">"12,200 ",</div>
<div style="position:absolute;left:428.47px;top:542.28px;font-size:12.867px;line-height:12.867px;color:#001080;font-family:'Liberation Mono',monospace;white-space:pre">+200 ,</div>
<div class="cj" style="left:474.79px;top:538.89px;color:#098658"><i>临</i><i>时</i><i>加</i><i>项</i></div>
<div style="position:absolute;left:32.36px;top:561.30px;font-size:12.867px;line-height:12.867px;color:#6e7681;font-family:'Liberation Mono',monospace;white-space:pre">29</div>
<div class="cj" style="left:74.30px;top:557.91px;color:#3b3b3b"><i>财</i><i>务</i><i>部</i></div>
<div style="position:absolute;left:116.15px;top:561.30px;font-size:12.867px;line-height:12.867px;color:#3b3b3b;font-family:'Liberation Mono',monospace;white-space:pre"> ,</div>
<div class="cj" style="left:131.59px;top:557.91px;color:#0000ff"><i>华</i><i>北</i><i>地</i><i>区</i></div>
<div style="position:absolute;left:187.39px;top:561.30px;font-size:12.867px;line-height:12.867px;color:#0000ff;font-family:'Liberation Mono',monospace;white-space:pre"> ,</div>
<div class="cj" style="left:202.83px;top:557.91px;color:#795e26"><i>办</i><i>公</i><i>用</i><i>品</i></div>
<div style="position:absolute;left:258.63px;top:561.30px;font-size:12.867px;line-height:12.867px;color:#795e26;font-family:'Liberation Mono',monospace;white-space:pre"> ,</div>
<div style="position:absolute;left:274.07px;top:561.30px;font-size:12.867px;line-height:12.867px;color:#008000;font-family:'Liberation Mono',monospace;white-space:pre">"7,000 ",</div>
<div style="position:absolute;left:343.55px;top:561.30px;font-size:12.867px;line-height:12.867px;color:#a31515;font-family:'Liberation Mono',monospace;white-space:pre">"6,800 ",</div>
<div style="position:absolute;left:413.03px;top:561.30px;font-size:12.867px;line-height:12.867px;color:#001080;font-family:'Liberation Mono',monospace;white-space:pre">-200 ,</div>
<div class="cj" style="left:459.35px;top:557.91px;color:#098658"><i>控</i><i>制</i><i>消</i><i>耗</i></div>
<div style="position:absolute;left:32.36px;top:580.32px;font-size:12.867px;line-height:12.867px;color:#6e7681;font-family:'Liberation Mono',monospace;white-space:pre">30</div>
<div class="cj" style="left:74.30px;top:576.93px;color:#3b3b3b"><i>财</i><i>务</i><i>部</i></div>
<div style="position:absolute;left:116.15px;top:580.32px;font-size:12.867px;line-height:12.867px;color:#3b3b3b;font-family:'Liberation Mono',monospace;white-space:pre"> ,</div>
<div class="cj" style="left:131.59px;top:576.93px;color:#0000ff"><i>华</i><i>南</i><i>地</i><i>区</i></div>
<div style="position:absolute;left:187.39px;top:580.32px;font-size:12.867px;line-height:12.867px;color:#0000ff;font-family:'Liberation Mono',monospace;white-space:pre"> ,</div>
<div class="cj" style="left:202.83px;top:576.93px;color:#795e26"><i>审</i><i>计</i><i>费</i><i>用</i></div>
<div style="position:absolute;left:258.63px;top:580.32px;font-size:12.867px;line-height:12.867px;color:#795e26;font-family:'Liberation Mono',monospace;white-space:pre"> ,</div>
<div style="position:absolute;left:274.07px;top:580.32px;font-size:12.867px;line-height:12.867px;color:#008000;font-family:'Liberation Mono',monospace;white-space:pre">"11,000 ",</div>
<div style="position:absolute;left:351.27px;top:580.32px;font-size:12.867px;line-height:12.867px;color:#a31515;font-family:'Liberation Mono',monospace;white-space:pre">"10,500 ",</div>
<div style="position:absolute;left:428.47px;top:580.32px;font-size:12.867px;line-height:12.867px;color:#001080;font-family:'Liberation Mono',monospace;white-space:pre">-500 ,</div>
<div class="cj" style="left:474.79px;top:576.93px;color:#098658"><i>谈</i><i>判</i><i>降</i><i>低</i><i>费</i><i>用</i></div>
<div style="position:absolute;left:32.36px;top:599.34px;font-size:12.867px;line-height:12.867px;color:#6e7681;font-family:'Liberation Mono',monospace;white-space:pre">31</div>
<div class="cj" style="left:74.30px;top:595.95px;color:#3b3b3b"><i>财</i><i>务</i><i>部</i></div>
<div style="position:absolute;left:116.15px;top:599.34px;font-size:12.867px;line-height:12.867px;color:#3b3b3b;font-family:'Liberation Mono',monospace;white-space:pre"> ,</div>
<div class="cj" style="left:131.59px;top:595.95px;color:#0000ff"><i>华</i><i>南</i><i>地</i><i>区</i></div>
<div style="position:absolute;left:187.39px;top:599.34px;font-size:12.867px;line-height:12.867px;color:#0000ff;font-family:'Liberation Mono',monospace;white-space:pre"> ,</div>
<div class="cj" style="left:202.83px;top:595.95px;color:#795e26"><i>办</i><i>公</i><i>用</i><i>品</i></div>
<div style="position:absolute;left:258.63px;top:599.34px;font-size:12.867px;line-height:12.867px;color:#795e26;font-family:'Liberation Mono',monospace;white-space:pre"> ,</div>
<div style="position:absolute;left:274.07px;top:599.34px;font-size:12.867px;line-height:12.867px;color:#008000;font-family:'Liberation Mono',monospace;white-space:pre">"6,000 ",</div>
<div style="position:absolute;left:343.55px;top:599.34px;font-size:12.867px;line-height:12.867px;color:#a31515;font-family:'Liberation Mono',monospace;white-space:pre">"6,200 ",</div>
<div style="position:absolute;left:413.03px;top:599.34px;font-size:12.867px;line-height:12.867px;color:#001080;font-family:'Liberation Mono',monospace;white-space:pre">+200 ,</div>
<div class="cj" style="left:459.35px;top:595.95px;color:#098658"><i>打</i><i>印</i><i>耗</i><i>材</i><i>增</i><i>加</i></div>
<div style="position:absolute;left:32.36px;top:618.36px;font-size:12.867px;line-height:12.867px;color:#6e7681;font-family:'Liberation Mono',monospace;white-space:pre">32</div>
<div class="cj" style="left:74.30px;top:614.97px;color:#3b3b3b"><i>运</i><i>营</i><i>部</i></div>
<div style="position:absolute;left:116.15px;top:618.36px;font-size:12.867px;line-height:12.867px;color:#3b3b3b;font-family:'Liberation Mono',monospace;white-space:pre"> ,</div>
<div class="cj" style="left:131.59px;top:614.97px;color:#0000ff"><i>华</i><i>东</i><i>地</i><i>区</i></div>
<div style="position:absolute;left:187.39px;top:618.36px;font-size:12.867px;line-height:12.867px;color:#0000ff;font-family:'Liberation Mono',monospace;white-space:pre"> ,</div>
<div class="cj" style="left:202.83px;top:614.97px;color:#795e26"><i>仓</i><i>储</i><i>费</i><i>用</i></div>
<div style="position:absolute;left:258.63px;top:618.36px;font-size:12.867px;line-height:12.867px;color:#795e26;font-family:'Liberation Mono',monospace;white-space:pre"> ,</div>
<div style="position:absolute;left:274.07px;top:618.36px;font-size:12.867px;line-height:12.867px;color:#008000;font-family:'Liberation Mono',monospace;white-space:pre">"40,000 ",</div>
<div style="position:absolute;left:351.27px;top:618.36px;font-size:12.867px;line-height:12.867px;color:#a31515;font-family:'Liberation Mono',monospace;white-space:pre">"41,000 ",</div>
<div style="position:absolute;left:428.47px;top:618.36px;font-size:12.867px;line-height:12.867px;color:#001080;font-family:'Liberation Mono',monospace;white-space:pre">"+1,000 ",</div>
<div class="cj" style="left:505.67px;top:614.97px;color:#098658"><i>仓</i><i>库</i><i>租</i><i>金</i><i>上</i><i>涨</i></div>
<div style="position:absolute;left:32.36px;top:637.38px;font-size:12.867px;line-height:12.867px;color:#6e7681;font-family:'Liberation Mono',monospace;white-space:pre">33</div>
<div class="cj" style="left:74.30px;top:633.99px;color:#3b3b3b"><i>运</i><i>营</i><i>部</i></div>
<div style="position:absolute;left:116.15px;top:637.38px;font-size:12.867px;line-height:12.867px;color:#3b3b3b;font-family:'Liberation Mono',monospace;white-space:pre"> ,</div>
<div class="cj" style="left:131.59px;top:633.99px;color:#0000ff"><i>华</i><i>东</i><i>地</i><i>区</i></div>
<div style="position:absolute;left:187.39px;top:637.38px;font-size:12.867px;line-height:12.867px;color:#0000ff;font-family:'Liberation Mono',monospace;white-space:pre"> ,</div>
<div class="cj" style="left:202.83px;top:633.99px;color:#795e26"><i>物</i><i>流</i><i>费</i><i>用</i></div>
<div style="position:absolute;left:258.63px;top:637.38px;font-size:12.867px;line-height:12.867px;color:#795e26;font-family:'Liberation Mono',monospace;white-space:pre"> ,</div>
<div style="position:absolute;left:274.07px;top:637.38px;font-size:12.867px;line-height:12.867px;color:#008000;font-family:'Liberation Mono',monospace;white-space:pre">"45,000 ",</div>
<div style="position:absolute;left:351.27px;top:637.38px;font-size:12.867px;line-height:12.867px;color:#a31515;font-family:'Liberation Mono',monospace;white-space:pre">"46,200 ",</div>
<div style="position:absolute;left:428.47px;top:637.38px;font-size:12.867px;line-height:12.867px;color:#001080;font-family:'Liberation Mono',monospace;white-space:pre">"+1,200 ",</div>
<div class="cj" style="left:505.67px;top:633.99px;color:#098658"><i>运</i><i>费</i><i>上</i><i>涨</i></div>
<div style="position:absolute;left:32.36px;top:656.40px;font-size:12.867px;line-height:12.867px;color:#6e7681;font-family:'Liberation Mono',monospace;white-space:pre">34</div>
<div class="cj" style="left:74.30px;top:653.01px;color:#3b3b3b"><i>运</i><i>营</i><i>部</i></div>
<div style="position:absolute;left:116.15px;top:656.40px;font-size:12.867px;line-height:12.867px;color:#3b3b3b;font-family:'Liberation Mono',monospace;white-space:pre"> ,</div>
<div class="cj" style="left:131.59px;top:653.01px;color:#0000ff"><i>华</i><i>北</i><i>地</i><i>区</i></div>
<div style="position:absolute;left:187.39px;top:656.40px;font-size:12.867px;line-height:12.867px;color:#0000ff;font-family:'Liberation Mono',monospace;white-space:pre"> ,</div>
<div class="cj" style="left:202.83px;top:653.01px;color:#795e26"><i>仓</i><i>储</i><i>费</i><i>用</i></div>
<div style="position:absolute;left:258.63px;top:656.40px;font-size:12.867px;line-height:12.867px;color:#795e26;font-family:'Liberation Mono',monospace;white-space:pre"> ,</div>
<div style="position:absolute;left:274.07px;top:656.40px;font-size:12.867px;line-height:12.867px;color:#008000;font-family:'Liberation Mono',monospace;white-space:pre">"35,000 ",</div>
<div style="position:absolute;left:351.27px;top:656.40px;font-size:12.867px;line-height:12.867px;color:#a31515;font-family:'Liberation Mono',monospace;white-space:pre">"34,500 ",</div>
<div style="position:absolute;left:428.47px;top:656.40px;font-size:12.867px;line-height:12.867px;color:#001080;font-family:'Liberation Mono',monospace;white-space:pre">-500 ,</div>
<div class="cj" style="left:474.79px;top:653.01px;color:#098658"><i>成</i><i>本</i><i>下</i><i>降</i></div>
<div style="position:absolute;left:32.36px;top:675.42px;font-size:12.867px;line-height:12.867px;color:#6e7681;font-family:'Liberation Mono',monospace;white-space:pre">35</div>
<div class="cj" style="left:74.30px;top:672.03px;color:#3b3b3b"><i>运</i><i>营</i><i>部</i></div>
<div style="position:absolute;left:116.15px;top:675.42px;font-size:12.867px;line-height:12.867px;color:#3b3b3b;font-family:'Liberation Mono',monospace;white-space:pre"> ,</div>
<div class="cj" style="left:131.59px;top:672.03px;color:#0000ff"><i>华</i><i>北</i><i>地</i><i>区</i></div>
<div style="position:absolute;left:187.39px;top:675.42px;font-size:12.867px;line-height:12.867px;color:#0000ff;font-family:'Liberation Mono',monospace;white-space:pre"> ,</div>
<div class="cj" style="left:202.83px;top:672.03px;color:#795e26"><i>物</i><i>流</i><i>费</i><i>用</i></div>
<div style="position:absolute;left:258.63px;top:675.42px;font-size:12.867px;line-height:12.867px;color:#795e26;font-family:'Liberation Mono',monospace;white-space:pre"> ,</div>
<div style="position:absolute;left:274.07px;top:675.42px;font-size:12.867px;line-height:12.867px;color:#008000;font-family:'Liberation Mono',monospace;white-space:pre">"38,000 ",</div>
<div style="position:absolute;left:351.27px;top:675.42px;font-size:12.867px;line-height:12.867px;color:#a31515;font-family:'Liberation Mono',monospace;white-space:pre">"39,000 ",</div>
<div style="position:absolute;left:428.47px;top:675.42px;font-size:12.867px;line-height:12.867px;color:#001080;font-family:'Liberation Mono',monospace;white-space:pre">"+1,000 ",</div>
<div class="cj" style="left:505.67px;top:672.03px;color:#098658"><i>新</i><i>线</i><i>路</i><i>调</i><i>整</i></div>
<div style="position:absolute;left:32.36px;top:694.44px;font-size:12.867px;line-height:12.867px;color:#6e7681;font-family:'Liberation Mono',monospace;white-space:pre">36</div>
<div class="cj" style="left:74.30px;top:691.05px;color:#3b3b3b"><i>运</i><i>营</i><i>部</i></div>
<div style="position:absolute;left:116.15px;top:694.44px;font-size:12.867px;line-height:12.867px;color:#3b3b3b;font-family:'Liberation Mono',monospace;white-space:pre"> ,</div>
<div class="cj" style="left:131.59px;top:691.05px;color:#0000ff"><i>华</i><i>南</i><i>地</i><i>区</i></div>
<div style="position:absolute;left:187.39px;top:694.44px;font-size:12.867px;line-height:12.867px;color:#0000ff;font-family:'Liberation Mono',monospace;white-space:pre"> ,</div>
<div class="cj" style="left:202.83px;top:691.05px;color:#795e26"><i>仓</i><i>储</i><i>费</i><i>用</i></div>
<div style="position:absolute;left:258.63px;top:694.44px;font-size:12.867px;line-height:12.867px;color:#795e26;font-family:'Liberation Mono',monospace;white-space:pre"> ,</div>
<div style="position:absolute;left:274.07px;top:694.44px;font-size:12.867px;line-height:12.867px;color:#008000;font-family:'Liberation Mono',monospace;white-space:pre">"33,000 ",</div>
<div style="position:absolute;left:351.27px;top:694.44px;font-size:12.867px;line-height:12.867px;color:#a31515;font-family:'Liberation Mono',monospace;white-space:pre">"32,000 ",</div>
<div style="position:absolute;left:428.47px;top:694.44px;font-size:12.867px;line-height:12.867px;color:#001080;font-family:'Liberation Mono',monospace;white-space:pre">"-1,000 ",</div>
<div class="cj" style="left:505.67px;top:691.05px;color:#098658"><i>优</i><i>惠</i><i>合</i><i>同</i></div>
<div style="position:absolute;left:32.36px;top:713.46px;font-size:12.867px;line-height:12.867px;color:#6e7681;font-family:'Liberation Mono',monospace;white-space:pre">37</div>
<div class="cj" style="left:74.30px;top:710.07px;color:#3b3b3b"><i>运</i><i>营</i><i>部</i></div>
<div style="position:absolute;left:116.15px;top:713.46px;font-size:12.867px;line-height:12.867px;color:#3b3b3b;font-family:'Liberation Mono',monospace;white-space:pre"> ,</div>
<div class="cj" style="left:131.59px;top:710.07px;color:#0000ff"><i>华</i><i>南</i><i>地</i><i>区</i></div>
<div style="position:absolute;left:187.39px;top:713.46px;font-size:12.867px;line-height:12.867px;color:#0000ff;font-family:'Liberation Mono',monospace;white-space:pre"> ,</div>
<div class="cj" style="left:202.83px;top:710.07px;color:#795e26"><i>物</i><i>流</i><i>费</i><i>用</i></div>
<div style="position:absolute;left:258.63px;top:713.46px;font-size:12.867px;line-height:12.867px;color:#795e26;font-family:'Liberation Mono',monospace;white-space:pre"> ,</div>
<div style="position:absolute;left:274.07px;top:713.46px;font-size:12.867px;line-height:12.867px;color:#008000;font-family:'Liberation Mono',monospace;white-space:pre">"36,000 ",</div>
<div style="position:absolute;left:351.27px;top:713.46px;font-size:12.867px;line-height:12.867px;color:#a31515;font-family:'Liberation Mono',monospace;white-space:pre">"37,500 ",</div>
<div style="position:absolute;left:428.47px;top:713.46px;font-size:12.867px;line-height:12.867px;color:#001080;font-family:'Liberation Mono',monospace;white-space:pre">"+1,500 ",</div>
<div class="cj" style="left:505.67px;top:710.07px;color:#098658"><i>燃</i><i>油</i><i>费</i><i>上</i><i>涨</i></div>
<div style="position:absolute;left:32.36px;top:732.48px;font-size:12.867px;line-height:12.867px;color:#6e7681;font-family:'Liberation Mono',monospace;white-space:pre">38</div>
<div class="cj" style="left:74.30px;top:729.09px;color:#3b3b3b"><i>研</i><i>发</i><i>部</i></div>
<div style="position:absolute;left:116.15px;top:732.48px;font-size:12.867px;line-height:12.867px;color:#3b3b3b;font-family:'Liberation Mono',monospace;white-space:pre"> ,</div>
<div class="cj" style="left:131.59px;top:729.09px;color:#0000ff"><i>华</i><i>东</i><i>地</i><i>区</i></div>
<div style="position:absolute;left:187.39px;top:732.48px;font-size:12.867px;line-height:12.867px;color:#0000ff;font-family:'Liberation Mono',monospace;white-space:pre"> ,</div>
<div class="cj" style="left:202.83px;top:729.09px;color:#795e26"><i>材</i><i>料</i><i>采</i><i>购</i></div>
<div style="position:absolute;left:258.63px;top:732.48px;font-size:12.867px;line-height:12.867px;color:#795e26;font-family:'Liberation Mono',monospace;white-space:pre"> ,</div>
<div style="position:absolute;left:274.07px;top:732.48px;font-size:12.867px;line-height:12.867px;color:#008000;font-family:'Liberation Mono',monospace;white-space:pre">"28,000 ",</div>
<div style="position:absolute;left:351.27px;top:732.48px;font-size:12.867px;line-height:12.867px;color:#a31515;font-family:'Liberation Mono',monospace;white-space:pre">"29,000 ",</div>
<div style="position:absolute;left:428.47px;top:732.48px;font-size:12.867px;line-height:12.867px;color:#001080;font-family:'Liberation Mono',monospace;white-space:pre">"+1,000 ",</div>
<div class="cj" style="left:505.67px;top:729.09px;color:#098658"><i>新</i><i>实</i><i>验</i><i>材</i><i>料</i></div>
<div style="position:absolute;left:32.36px;top:751.50px;font-size:12.867px;line-height:12.867px;color:#6e7681;font-family:'Liberation Mono',monospace;white-space:pre">39</div>
<div class="cj" style="left:74.30px;top:748.11px;color:#3b3b3b"><i>研</i><i>发</i><i>部</i></div>
<div style="position:absolute;left:116.15px;top:751.50px;font-size:12.867px;line-height:12.867px;color:#3b3b3b;font-family:'Liberation Mono',monospace;white-space:pre"> ,</div>
<div class="cj" style="left:131.59px;top:748.11px;color:#0000ff"><i>华</i><i>东</i><i>地</i><i>区</i></div>
<div style="position:absolute;left:187.39px;top:751.50px;font-size:12.867px;line-height:12.867px;color:#0000ff;font-family:'Liberation Mono',monospace;white-space:pre"> ,</div>
<div class="cj" style="left:202.83px;top:748.11px;color:#795e26"><i>外</i><i>包</i><i>研</i><i>发</i></div>
<div style="position:absolute;left:258.63px;top:751.50px;font-size:12.867px;line-height:12.867px;color:#795e26;font-family:'Liberation Mono',monospace;white-space:pre"> ,</div>
<div style="position:absolute;left:274.07px;top:751.50px;font-size:12.867px;line-height:12.867px;color:#008000;font-family:'Liberation Mono',monospace;white-space:pre">"32,000 ",</div>
<div style="position:absolute;left:351.27px;top:751.50px;font-size:12.867px;line-height:12.867px;color:#a31515;font-family:'Liberation Mono',monospace;white-space:pre">"33,500 ",</div>
<div style="position:absolute;left:428.47px;top:751.50px;font-size:12.867px;line-height:12.867px;color:#001080;font-family:'Liberation Mono',monospace;white-space:pre">"+1,500 ",</div>
<div class="cj" style="left:505.67px;top:748.11px;color:#098658"><i>项</i><i>目</i><i>外</i><i>包</i><i>增</i><i>加</i></div>
<div style="position:absolute;left:17px;top:474px;width:745px;height:19px;background:#ffffff;"></div>
<div style="position:absolute;left:17px;top:493px;width:745px;height:4px;background:linear-gradient(#d8d8d8,rgba(255,255,255,0));"></div>
<div style="position:absolute;left:40.08px;top:479.74px;font-size:12.867px;line-height:12.867px;color:#6e7681;font-family:'Liberation Mono',monospace;white-space:pre">1</div>
<div class="cj" style="left:74.30px;top:476.35px;color:#3b3b3b"><i>部</i><i>门</i></div>
<div style="position:absolute;left:102.20px;top:479.74px;font-size:12.867px;line-height:12.867px;color:#3b3b3b;font-family:'Liberation Mono',monospace;white-space:pre"> ,</div>
<div class="cj" style="left:117.64px;top:476.35px;color:#0000ff"><i>地</i><i>区</i></div>
<div style="position:absolute;left:145.54px;top:479.74px;font-size:12.867px;line-height:12.867px;color:#0000ff;font-family:'Liberation Mono',monospace;white-space:pre"> ,</div>
<div class="cj" style="left:160.98px;top:476.35px;color:#795e26"><i>费</i><i>用</i><i>类</i><i>别</i></div>
<div style="position:absolute;left:216.78px;top:479.74px;font-size:12.867px;line-height:12.867px;color:#795e26;font-family:'Liberation Mono',monospace;white-space:pre"> ,</div>
<div class="cj" style="left:232.22px;top:476.35px;color:#008000"><i>预</i><i>算</i><i>金</i><i>额</i></div>
<div style="position:absolute;left:288.02px;top:476.35px;width:15.5px;font-size:14px;line-height:14px;color:#008000;white-space:pre">（</div>
<div style="position:absolute;left:303.52px;top:479.74px;font-size:12.867px;line-height:12.867px;color:#008000;font-family:'Liberation Mono',monospace;white-space:pre">CNY</div>
<div style="position:absolute;left:326.68px;top:476.35px;width:15.5px;font-size:14px;line-height:14px;color:#008000;white-space:pre">）</div>
<div style="position:absolute;left:342.18px;top:479.74px;font-size:12.867px;line-height:12.867px;color:#008000;font-family:'Liberation Mono',monospace;white-space:pre">,</div>
<div class="cj" style="left:349.90px;top:476.35px;color:#a31515"><i>实</i><i>际</i><i>金</i><i>额</i></div>
<div style="position:absolute;left:405.70px;top:476.35px;width:15.5px;font-size:14px;line-height:14px;color:#a31515;white-space:pre">（</div>
<div style="position:absolute;left:421.20px;top:479.74px;font-size:12.867px;line-height:12.867px;color:#a31515;font-family:'Liberation Mono',monospace;white-space:pre">CNY</div>
<div style="position:absolute;left:444.36px;top:476.35px;width:15.5px;font-size:14px;line-height:14px;color:#a31515;white-space:pre">）</div>
<div style="position:absolute;left:459.86px;top:479.74px;font-size:12.867px;line-height:12.867px;color:#a31515;font-family:'Liberation Mono',monospace;white-space:pre">,</div>
<div class="cj" style="left:467.58px;top:476.35px;color:#001080"><i>差</i><i>额</i></div>
<div style="position:absolute;left:495.48px;top:476.35px;width:15.5px;font-size:14px;line-height:14px;color:#001080;white-space:pre">（</div>
<div style="position:absolute;left:510.98px;top:479.74px;font-size:12.867px;line-height:12.867px;color:#001080;font-family:'Liberation Mono',monospace;white-space:pre">CNY</div>
<div style="position:absolute;left:534.14px;top:476.35px;width:15.5px;font-size:14px;line-height:14px;color:#001080;white-space:pre">）</div>
<div style="position:absolute;left:549.64px;top:479.74px;font-size:12.867px;line-height:12.867px;color:#001080;font-family:'Liberation Mono',monospace;white-space:pre">,</div>
<div class="cj" style="left:557.36px;top:476.35px;color:#098658"><i>备</i><i>注</i></div>
<div style="position:absolute;left:17px;top:765px;width:745px;height:19px;background:#f8f8f8;"></div>
<div style="position:absolute;left:17px;top:765px;width:745px;height:1px;background:#e5e5e5;"></div>
<div style="position:absolute;left:469.75px;top:771.18px;font-size:11.6px;line-height:11.6px;color:#3b3b3b;font-weight:normal;letter-spacing:-0.085px;white-space:pre;">Ln 50, Col 1</div>
<div style="position:absolute;left:547.67px;top:771.18px;font-size:11.6px;line-height:11.6px;color:#3b3b3b;font-weight:normal;letter-spacing:-0.390px;white-space:pre;">Spaces: 4</div>
<div style="position:absolute;left:612.11px;top:771.18px;font-size:11.6px;line-height:11.6px;color:#3b3b3b;font-weight:normal;letter-spacing:-0.066px;white-space:pre;">UTF-8</div>
<div style="position:absolute;left:659.75px;top:771.18px;font-size:11.6px;line-height:11.6px;color:#3b3b3b;font-weight:normal;letter-spacing:-2.221px;white-space:pre;">LF</div>
<div style="position:absolute;left:689.31px;top:771.18px;font-size:11.6px;line-height:11.6px;color:#3b3b3b;font-weight:normal;letter-spacing:0.215px;white-space:pre;">{ }</div>
<div style="position:absolute;left:707.41px;top:771.18px;font-size:11.6px;line-height:11.6px;color:#3b3b3b;font-weight:normal;letter-spacing:-1.156px;white-space:pre;">CSV</div>
<svg style="position:absolute;left:740px;top:765px;" width="24" height="20" viewBox="0 0 24 20"><circle cx="9.6" cy="7.7" r="2.7" fill="none" stroke="#3b3b3b" stroke-width="1.4"/><circle cx="14.4" cy="7.7" r="2.7" fill="none" stroke="#3b3b3b" stroke-width="1.4"/><path d="M7,9.8 Q5,11.2 5.6,13.6 Q7.6,16.4 12,16.4 Q16.4,16.4 18.4,13.6 Q19,11.2 17,9.8" fill="none" stroke="#3b3b3b" stroke-width="1.5"/><path d="M10.5,12 V13.8 M13.5,12 V13.8" stroke="#3b3b3b" stroke-width="1.3"/></svg>
<div style="position:absolute;left:15px;top:421px;width:749px;height:2px;background:#0b7ff0;"></div>
<div style="position:absolute;left:15px;top:421px;width:2px;height:365px;background:#0b7ff0;"></div>
<div style="position:absolute;left:762px;top:421px;width:2px;height:365px;background:#0b7ff0;"></div>
<div style="position:absolute;left:15px;top:784px;width:749px;height:2px;background:#0b7ff0;"></div>
</body></html>
